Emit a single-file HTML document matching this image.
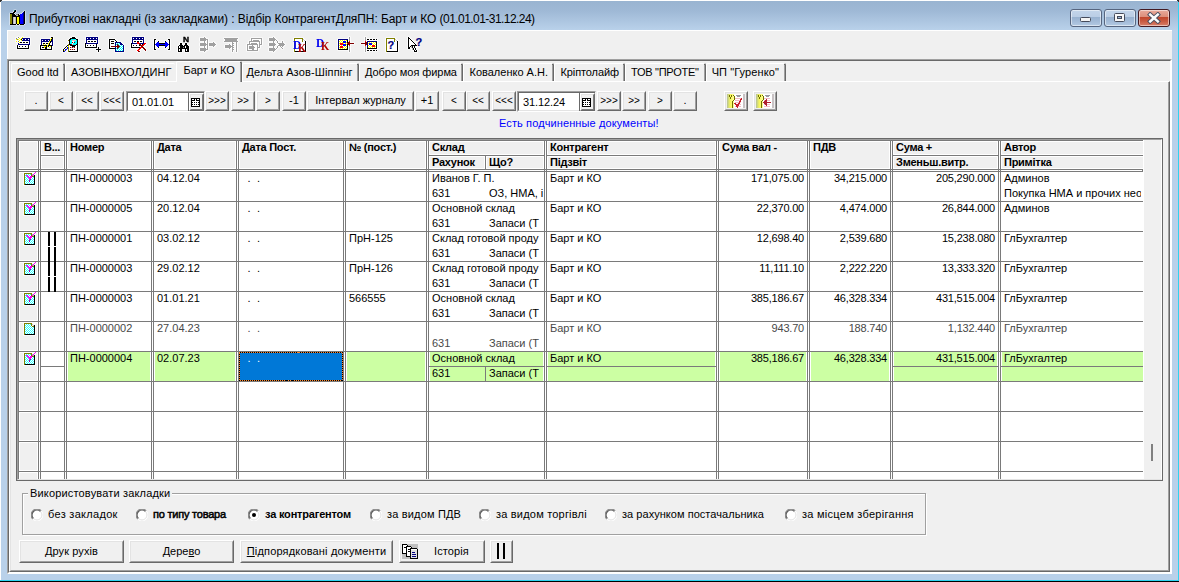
<!DOCTYPE html>
<html lang="uk"><head><meta charset="utf-8"><title>Прибуткові накладні</title>
<style>
html,body{margin:0;padding:0;}
body{width:1179px;height:582px;overflow:hidden;background:#fff;position:relative;
 font-family:"Liberation Sans",sans-serif;font-size:11px;color:#000;}
div,span{position:absolute;box-sizing:border-box;}
.t{white-space:nowrap;line-height:13px;height:13px;font-size:11px;}
.b{font-weight:bold;letter-spacing:-0.26px;}
.btn{background:#f0f0f0;border-style:solid;border-width:1px;border-color:#fff #696969 #696969 #fff;}
.btn>i{position:absolute;left:0;top:0;right:0;bottom:0;border-style:solid;border-width:1px;border-color:#e3e3e3 #a0a0a0 #a0a0a0 #e3e3e3;}
.btn>span{left:0;right:0;text-align:center;white-space:nowrap;line-height:13px;}
.hc{background:#f0f0f0;border:1px solid #7a7a7a;box-shadow:inset 0 0 0 1px #fff;}
.dc{background:#fff;border:1px solid #7a7a7a;}
.clip{overflow:hidden;}
.cb{border:1px solid #56657f;border-radius:3px;box-shadow:inset 0 0 0 1px rgba(255,255,255,.55);}
.ig{font-weight:bold;line-height:1;white-space:nowrap;}
</style></head>
<body>
<div style="left:1px;top:1px;width:1178px;height:580px;background:#b9d1ea;"></div>
<div style="left:1px;top:1px;width:1178px;height:29px;background:linear-gradient(#99b4d1,#9fb9d6 35%,#b9d1ea);"></div>
<div style="left:1178px;top:2px;width:1px;height:579px;background:#2fd3f0;"></div>
<div style="left:0px;top:580px;width:1179px;height:1px;background:#2fd3f0;"></div>
<div style="left:0px;top:581px;width:1179px;height:1px;background:#000;"></div>
<div style="left:0px;top:0px;width:2px;height:1px;background:#333;"></div>
<div style="left:0px;top:1px;width:1px;height:1px;background:#333;"></div>
<div style="left:1177px;top:0px;width:2px;height:1px;background:#333;"></div>
<div style="left:1178px;top:1px;width:1px;height:1px;background:#333;"></div>
<svg style="position:absolute;left:10px;top:9px;filter:drop-shadow(1px 0 0 rgba(255,255,255,.3)) drop-shadow(-1px 0 0 rgba(255,255,255,.3)) drop-shadow(0 1px 0 rgba(255,255,255,.3)) drop-shadow(0 -1px 0 rgba(255,255,255,.3));" width="16" height="16" viewBox="0 0 16 16" shape-rendering="crispEdges"><path fill="#008080" d="M4 1h1v1h-1z"/><path fill="#000000" d="M5 1h1v1h-1zM4 2h2v1h-2zM14 2h1v1h-1zM3 3h2v1h-2zM14 3h1v1h-1zM0 4h4v1h-4zM14 4h1v1h-1zM2 5h3v1h-3zM8 5h1v1h-1zM14 5h1v1h-1zM2 6h4v1h-4zM8 6h2v1h-2zM14 6h1v1h-1zM2 7h8v1h-8zM14 7h1v1h-1zM2 8h1v1h-1zM6 8h1v1h-1zM9 8h1v1h-1zM14 8h1v1h-1zM2 9h1v1h-1zM6 9h1v1h-1zM9 9h1v1h-1zM14 9h1v1h-1zM2 10h1v1h-1zM6 10h1v1h-1zM9 10h1v1h-1zM14 10h1v1h-1zM2 11h1v1h-1zM6 11h1v1h-1zM9 11h1v1h-1zM14 11h1v1h-1zM2 12h1v1h-1zM6 12h1v1h-1zM9 12h1v1h-1zM14 12h1v1h-1zM2 13h1v1h-1zM6 13h1v1h-1zM9 13h1v1h-1zM14 13h1v1h-1zM2 14h1v1h-1zM6 14h1v1h-1zM9 14h1v1h-1zM14 14h1v1h-1zM0 15h6v1h-6zM7 15h2v1h-2zM10 15h4v1h-4z"/><path fill="#000080" d="M13 3h1v1h-1zM13 4h1v1h-1zM13 5h1v1h-1zM13 6h1v1h-1zM13 7h1v1h-1zM13 8h1v1h-1zM13 9h1v1h-1zM13 10h1v1h-1zM13 11h1v1h-1zM13 12h1v1h-1zM13 13h1v1h-1zM13 14h1v1h-1z"/><path fill="#0000ff" d="M12 4h1v1h-1zM10 5h3v1h-3zM10 6h3v1h-3zM10 7h3v1h-3zM10 8h3v1h-3zM10 9h3v1h-3zM10 10h3v1h-3zM10 11h3v1h-3zM10 12h3v1h-3zM10 13h3v1h-3zM10 14h3v1h-3z"/><path fill="#808000" d="M0 5h2v1h-2zM0 6h2v1h-2zM0 7h2v1h-2zM0 8h2v1h-2zM0 9h2v1h-2zM0 10h2v1h-2zM0 11h2v1h-2zM0 12h2v1h-2zM0 13h2v1h-2zM0 14h2v1h-2z"/><path fill="#808080" d="M6 5h2v1h-2z"/><path fill="#c0c0c0" d="M6 6h2v1h-2zM3 8h1v1h-1zM5 8h1v1h-1zM3 9h1v1h-1zM5 9h1v1h-1zM3 10h1v1h-1zM5 10h1v1h-1zM3 11h1v1h-1zM5 11h1v1h-1zM3 12h1v1h-1zM5 12h1v1h-1zM3 13h1v1h-1zM5 13h1v1h-1zM3 14h1v1h-1zM5 14h1v1h-1z"/><path fill="#e0e0e0" d="M4 8h1v1h-1zM4 9h1v1h-1zM4 10h1v1h-1zM4 11h1v1h-1zM4 12h1v1h-1zM4 13h1v1h-1zM4 14h1v1h-1z"/><path fill="#ffff00" d="M7 8h2v1h-2zM7 9h2v1h-2zM7 10h2v1h-2zM7 11h2v1h-2zM7 12h2v1h-2zM7 13h2v1h-2zM7 14h2v1h-2z"/></svg>
<span class="t title" style="left:29px;top:12px;font-size:12px;line-height:15px;height:15px;letter-spacing:-0.07px;">Прибуткові накладні (із закладками) : Відбір КонтрагентДляПН: Барт и КО <span style="position:static;letter-spacing:-0.55px;">(01.01.01-31.12.24)</span></span>
<div style="left:1070px;top:9px;width:32px;height:18px;background:linear-gradient(#c3d5ea 0%,#bacde5 45%,#98b2d0 46%,#a3bbd8 70%,#b4cae3 100%);border:1px solid #56657f;border-radius:3px;box-shadow:inset 0 0 0 1px rgba(255,255,255,.5);"><svg style="position:absolute;left:9px;top:7px" width="11" height="5" viewBox="0 0 11 5"><rect x="0.5" y="0.5" width="10" height="4" rx="1" fill="#f4f4f4" stroke="#454a5a"/></svg></div>
<div style="left:1104px;top:9px;width:32px;height:18px;background:linear-gradient(#c3d5ea 0%,#bacde5 45%,#98b2d0 46%,#a3bbd8 70%,#b4cae3 100%);border:1px solid #56657f;border-radius:3px;box-shadow:inset 0 0 0 1px rgba(255,255,255,.5);"><svg style="position:absolute;left:9px;top:3px" width="11" height="9" viewBox="0 0 11 9"><rect x="0.5" y="0.5" width="10" height="8" rx="1" fill="#f8f8f8" stroke="#454a5a"/><rect x="3.5" y="3.5" width="4" height="2" fill="#9db7d6" stroke="#454a5a"/></svg></div>
<div style="left:1138px;top:9px;width:32px;height:18px;background:linear-gradient(#e9aa9b 0%,#dc8d79 45%,#c2472c 46%,#c85a41 70%,#d8806b 100%);border:1px solid #431a22;border-radius:3px;box-shadow:inset 0 0 0 1px rgba(255,255,255,.5);"><svg style="position:absolute;left:8px;top:2px" width="14" height="12" viewBox="0 0 14 12"><path d="M3.2 2.6L10.8 9.4M10.8 2.6L3.2 9.4" fill="none" stroke="#4a4f60" stroke-width="4.4" stroke-linecap="square"/><path d="M3.2 2.6L10.8 9.4M10.8 2.6L3.2 9.4" fill="none" stroke="#fbfbfb" stroke-width="2.5" stroke-linecap="square"/></svg></div>
<div style="left:7px;top:30px;width:1165px;height:544px;background:#f0f0f0;"></div>
<div style="left:7px;top:30px;width:1165px;height:1px;background:#fff;"></div>
<div style="left:7px;top:30px;width:1px;height:29px;background:#fff;"></div>
<svg style="position:absolute;left:15px;top:36px;filter:drop-shadow(1px 0 0 rgba(255,255,255,.6)) drop-shadow(-1px 0 0 rgba(255,255,255,.6)) drop-shadow(0 1px 0 rgba(255,255,255,.6)) drop-shadow(0 -1px 0 rgba(255,255,255,.6));" width="16" height="16" viewBox="0 0 16 16" shape-rendering="crispEdges"><path fill="#808080" d="M3 1h1v1h-1zM1 2h1v1h-1zM2 3h1v1h-1zM3 5h1v1h-1z"/><path fill="#ffff00" d="M7 1h1v1h-1zM4 2h1v1h-1zM6 2h1v1h-1zM1 3h1v1h-1zM3 3h1v1h-1zM5 3h1v1h-1zM4 4h1v1h-1zM6 4h1v1h-1zM1 5h1v1h-1zM4 6h1v1h-1z"/><path fill="#000080" d="M7 2h8v1h-8zM8 3h2v1h-2zM11 3h2v1h-2zM14 3h1v1h-1zM7 4h8v1h-8zM14 5h1v1h-1zM14 6h1v1h-1zM3 7h1v1h-1zM14 7h1v1h-1zM3 8h12v1h-12z"/><path fill="#ffffff" d="M4 3h1v1h-1zM7 3h1v1h-1zM10 3h1v1h-1zM13 3h1v1h-1zM4 5h10v1h-10zM7 6h1v1h-1zM10 6h1v1h-1zM13 6h1v1h-1zM4 7h10v1h-10zM3 9h10v1h-10zM3 10h1v1h-1zM5 10h2v1h-2zM8 10h2v1h-2zM11 10h2v1h-2zM3 11h10v1h-10z"/><path fill="#000000" d="M6 3h1v1h-1zM5 6h2v1h-2zM8 6h2v1h-2zM11 6h2v1h-2zM2 9h1v1h-1zM13 9h1v1h-1zM2 10h1v1h-1zM4 10h1v1h-1zM7 10h1v1h-1zM10 10h1v1h-1zM13 10h1v1h-1zM2 11h1v1h-1zM13 11h1v1h-1zM2 12h12v1h-12z"/></svg>
<svg style="position:absolute;left:39px;top:36px;filter:drop-shadow(1px 0 0 rgba(255,255,255,.6)) drop-shadow(-1px 0 0 rgba(255,255,255,.6)) drop-shadow(0 1px 0 rgba(255,255,255,.6)) drop-shadow(0 -1px 0 rgba(255,255,255,.6));" width="16" height="16" viewBox="0 0 16 16" shape-rendering="crispEdges"><path fill="#000000" d="M12 1h2v1h-2zM13 2h1v1h-1zM12 3h1v1h-1zM12 4h1v1h-1zM11 5h1v1h-1zM11 6h1v1h-1zM4 7h2v1h-2zM7 7h2v1h-2zM10 7h1v1h-1zM10 8h1v1h-1zM1 9h7v1h-7zM9 9h4v1h-4zM1 10h1v1h-1zM7 10h1v1h-1zM9 10h1v1h-1zM12 10h1v1h-1zM1 11h1v1h-1zM3 11h2v1h-2zM6 11h2v1h-2zM12 11h1v1h-1zM1 12h1v1h-1zM6 12h2v1h-2zM12 12h1v1h-1zM1 13h12v1h-12z"/><path fill="#ffff00" d="M12 2h1v1h-1zM11 3h1v1h-1zM11 4h1v1h-1zM10 5h1v1h-1zM10 6h1v1h-1zM9 7h1v1h-1zM4 8h1v1h-1zM6 8h1v1h-1zM9 8h1v1h-1zM8 9h1v1h-1zM5 10h2v1h-2zM8 10h1v1h-1zM11 10h1v1h-1zM5 11h1v1h-1zM10 11h1v1h-1z"/><path fill="#000080" d="M2 3h9v1h-9zM13 3h1v1h-1zM2 4h1v1h-1zM4 4h2v1h-2zM7 4h2v1h-2zM10 4h1v1h-1zM13 4h1v1h-1zM2 5h8v1h-8zM12 5h2v1h-2zM2 6h1v1h-1zM13 6h1v1h-1zM2 7h1v1h-1zM13 7h1v1h-1zM2 8h1v1h-1zM13 8h1v1h-1zM13 9h1v1h-1z"/><path fill="#ffffff" d="M3 4h1v1h-1zM6 4h1v1h-1zM9 4h1v1h-1zM3 6h7v1h-7zM12 6h1v1h-1zM3 7h1v1h-1zM6 7h1v1h-1zM11 7h2v1h-2zM3 8h1v1h-1zM5 8h1v1h-1zM7 8h2v1h-2zM11 8h2v1h-2zM2 10h3v1h-3zM10 10h1v1h-1zM2 11h1v1h-1zM8 11h2v1h-2zM11 11h1v1h-1zM2 12h4v1h-4zM8 12h4v1h-4z"/></svg>
<svg style="position:absolute;left:62px;top:36px;filter:drop-shadow(1px 0 0 rgba(255,255,255,.6)) drop-shadow(-1px 0 0 rgba(255,255,255,.6)) drop-shadow(0 1px 0 rgba(255,255,255,.6)) drop-shadow(0 -1px 0 rgba(255,255,255,.6));" width="16" height="16" viewBox="0 0 16 16" shape-rendering="crispEdges"><path fill="#000000" d="M10 1h3v1h-3zM8 2h6v1h-6zM7 3h2v1h-2zM14 3h2v1h-2zM7 4h1v1h-1zM15 4h1v1h-1zM7 5h1v1h-1zM15 5h1v1h-1zM7 6h1v1h-1zM15 6h1v1h-1zM7 7h1v1h-1zM15 7h1v1h-1zM7 8h2v1h-2zM14 8h2v1h-2zM5 9h1v1h-1zM8 9h6v1h-6zM15 9h1v1h-1zM4 10h1v1h-1zM10 10h3v1h-3zM15 10h1v1h-1zM3 11h1v1h-1zM15 11h1v1h-1zM2 12h1v1h-1zM15 12h1v1h-1zM1 13h1v1h-1zM15 13h1v1h-1zM1 14h1v1h-1zM15 14h1v1h-1zM1 15h1v1h-1zM7 15h9v1h-9z"/><path fill="#00ffff" d="M9 3h5v1h-5zM8 4h2v1h-2zM14 4h1v1h-1zM8 5h2v1h-2zM12 5h3v1h-3zM8 6h2v1h-2zM13 6h2v1h-2zM8 7h2v1h-2zM11 7h4v1h-4zM11 8h3v1h-3z"/><path fill="#808000" d="M6 4h1v1h-1zM6 8h1v1h-1zM6 9h1v1h-1zM6 11h1v1h-1zM6 12h1v1h-1zM6 13h1v1h-1zM6 14h1v1h-1zM6 15h1v1h-1z"/><path fill="#f0b0b8" d="M10 4h4v1h-4zM10 8h1v1h-1zM9 11h1v1h-1zM11 11h1v1h-1zM9 13h1v1h-1zM11 13h1v1h-1z"/><path fill="#ffffff" d="M10 5h2v1h-2zM11 6h1v1h-1zM10 7h1v1h-1zM7 9h1v1h-1zM14 9h1v1h-1zM7 10h3v1h-3zM13 10h2v1h-2zM7 11h1v1h-1zM13 11h2v1h-2zM7 12h8v1h-8zM7 13h1v1h-1zM13 13h2v1h-2zM7 14h8v1h-8z"/><path fill="#800000" d="M10 6h1v1h-1zM12 6h1v1h-1zM9 8h1v1h-1zM8 11h1v1h-1zM10 11h1v1h-1zM12 11h1v1h-1zM8 13h1v1h-1zM10 13h1v1h-1zM12 13h1v1h-1z"/><path fill="#ffff00" d="M6 10h1v1h-1zM4 12h1v1h-1zM2 14h1v1h-1z"/><path fill="#0000ff" d="M5 11h1v1h-1zM5 12h1v1h-1zM3 13h2v1h-2zM3 14h1v1h-1zM2 15h1v1h-1z"/></svg>
<svg style="position:absolute;left:85px;top:36px;filter:drop-shadow(1px 0 0 rgba(255,255,255,.6)) drop-shadow(-1px 0 0 rgba(255,255,255,.6)) drop-shadow(0 1px 0 rgba(255,255,255,.6)) drop-shadow(0 -1px 0 rgba(255,255,255,.6));" width="16" height="16" viewBox="0 0 16 16" shape-rendering="crispEdges"><path fill="#000080" d="M1 1h12v1h-12zM1 2h1v1h-1zM3 2h2v1h-2zM6 2h2v1h-2zM9 2h2v1h-2zM12 2h1v1h-1zM1 3h12v1h-12zM1 4h1v1h-1zM12 4h1v1h-1zM1 5h1v1h-1zM12 5h1v1h-1zM1 6h1v1h-1zM12 6h1v1h-1zM1 7h12v1h-12z"/><path fill="#ffffff" d="M2 2h1v1h-1zM5 2h1v1h-1zM8 2h1v1h-1zM11 2h1v1h-1zM2 4h10v1h-10zM2 5h1v1h-1zM5 5h1v1h-1zM8 5h1v1h-1zM11 5h1v1h-1zM2 6h10v1h-10zM1 8h10v1h-10zM1 9h1v1h-1zM3 9h2v1h-2zM6 9h2v1h-2zM9 9h2v1h-2zM1 10h10v1h-10z"/><path fill="#000000" d="M3 5h2v1h-2zM6 5h2v1h-2zM9 5h2v1h-2zM0 7h1v1h-1zM0 8h1v1h-1zM11 8h1v1h-1zM0 9h1v1h-1zM2 9h1v1h-1zM5 9h1v1h-1zM8 9h1v1h-1zM11 9h1v1h-1zM0 10h1v1h-1zM11 10h1v1h-1zM0 11h12v1h-12zM13 11h1v1h-1zM13 12h1v1h-1zM11 13h5v1h-5zM13 14h1v1h-1zM13 15h1v1h-1z"/></svg>
<svg style="position:absolute;left:108px;top:36px;filter:drop-shadow(1px 0 0 rgba(255,255,255,.6)) drop-shadow(-1px 0 0 rgba(255,255,255,.6)) drop-shadow(0 1px 0 rgba(255,255,255,.6)) drop-shadow(0 -1px 0 rgba(255,255,255,.6));" width="16" height="16" viewBox="0 0 16 16" shape-rendering="crispEdges"><path fill="#000000" d="M1 3h6v1h-6zM1 4h1v1h-1zM7 4h1v1h-1zM1 5h1v1h-1zM3 5h3v1h-3zM8 5h1v1h-1zM1 6h1v1h-1zM1 7h1v1h-1zM3 7h3v1h-3zM1 8h1v1h-1zM1 9h1v1h-1zM1 10h1v1h-1zM1 11h1v1h-1zM1 12h6v1h-6z"/><path fill="#ffffff" d="M2 4h5v1h-5zM2 5h1v1h-1zM6 5h2v1h-2zM2 6h5v1h-5zM2 7h1v1h-1zM6 7h1v1h-1zM8 7h1v1h-1zM10 7h1v1h-1zM2 8h5v1h-5zM11 8h1v1h-1zM2 9h5v1h-5zM8 9h1v1h-1zM12 9h1v1h-1zM14 9h1v1h-1zM2 10h1v1h-1zM13 10h1v1h-1zM2 11h5v1h-5zM8 11h1v1h-1zM12 11h1v1h-1zM14 11h1v1h-1zM11 12h1v1h-1zM13 12h1v1h-1zM8 13h1v1h-1zM10 13h1v1h-1zM12 13h1v1h-1zM14 13h1v1h-1zM9 14h1v1h-1zM11 14h1v1h-1zM13 14h1v1h-1z"/><path fill="#000080" d="M7 6h6v1h-6zM7 7h1v1h-1zM12 7h2v1h-2zM7 8h1v1h-1zM12 8h3v1h-3zM7 9h1v1h-1zM15 9h1v1h-1zM15 10h1v1h-1zM7 11h1v1h-1zM15 11h1v1h-1zM7 12h1v1h-1zM15 12h1v1h-1zM7 13h1v1h-1zM15 13h1v1h-1zM7 14h1v1h-1zM15 14h1v1h-1zM7 15h9v1h-9z"/><path fill="#00ffff" d="M9 7h1v1h-1zM11 7h1v1h-1zM8 8h1v1h-1zM10 8h1v1h-1zM11 9h1v1h-1zM13 9h1v1h-1zM12 10h1v1h-1zM14 10h1v1h-1zM11 11h1v1h-1zM13 11h1v1h-1zM8 12h1v1h-1zM10 12h1v1h-1zM12 12h1v1h-1zM14 12h1v1h-1zM9 13h1v1h-1zM11 13h1v1h-1zM13 13h1v1h-1zM8 14h1v1h-1zM10 14h1v1h-1zM12 14h1v1h-1zM14 14h1v1h-1z"/><path fill="#800000" d="M9 8h1v1h-1zM9 9h2v1h-2zM3 10h9v1h-9zM9 11h2v1h-2zM9 12h1v1h-1z"/></svg>
<svg style="position:absolute;left:131px;top:36px;filter:drop-shadow(1px 0 0 rgba(255,255,255,.6)) drop-shadow(-1px 0 0 rgba(255,255,255,.6)) drop-shadow(0 1px 0 rgba(255,255,255,.6)) drop-shadow(0 -1px 0 rgba(255,255,255,.6));" width="16" height="16" viewBox="0 0 16 16" shape-rendering="crispEdges"><path fill="#000080" d="M1 1h12v1h-12zM1 2h1v1h-1zM3 2h2v1h-2zM6 2h2v1h-2zM9 2h2v1h-2zM12 2h1v1h-1zM1 3h12v1h-12zM1 4h1v1h-1zM12 4h1v1h-1zM1 5h1v1h-1zM12 5h1v1h-1zM1 6h1v1h-1zM12 6h1v1h-1zM1 7h5v1h-5zM9 7h4v1h-4z"/><path fill="#ffffff" d="M2 2h1v1h-1zM5 2h1v1h-1zM8 2h1v1h-1zM11 2h1v1h-1zM2 4h10v1h-10zM2 5h1v1h-1zM5 5h1v1h-1zM8 5h1v1h-1zM11 5h1v1h-1zM2 6h4v1h-4zM8 6h4v1h-4zM1 8h7v1h-7zM10 8h1v1h-1zM1 9h1v1h-1zM3 9h2v1h-2zM6 9h2v1h-2zM1 10h9v1h-9z"/><path fill="#000000" d="M3 5h2v1h-2zM6 5h2v1h-2zM9 5h2v1h-2zM0 7h1v1h-1zM0 8h1v1h-1zM11 8h1v1h-1zM0 9h1v1h-1zM2 9h1v1h-1zM5 9h1v1h-1zM8 9h1v1h-1zM0 10h1v1h-1zM0 11h9v1h-9z"/><path fill="#ff0000" d="M6 6h2v1h-2zM6 7h2v1h-2zM13 7h2v1h-2zM12 8h2v1h-2zM11 9h2v1h-2zM9 11h2v1h-2zM8 12h2v1h-2zM7 13h2v1h-2zM6 14h2v1h-2z"/><path fill="#800000" d="M8 7h1v1h-1zM8 8h2v1h-2zM9 9h2v1h-2zM10 10h2v1h-2zM11 11h2v1h-2zM12 12h2v1h-2zM13 13h2v1h-2zM14 14h1v1h-1zM7 15h2v1h-2z"/></svg>
<svg style="position:absolute;left:154px;top:36px;filter:drop-shadow(1px 0 0 rgba(255,255,255,.6)) drop-shadow(-1px 0 0 rgba(255,255,255,.6)) drop-shadow(0 1px 0 rgba(255,255,255,.6)) drop-shadow(0 -1px 0 rgba(255,255,255,.6));" width="16" height="16" viewBox="0 0 16 16" shape-rendering="crispEdges"><path fill="#000000" d="M0 3h2v1h-2zM14 3h2v1h-2zM0 4h1v1h-1zM15 4h1v1h-1zM0 5h1v1h-1zM4 5h1v1h-1zM11 5h1v1h-1zM15 5h1v1h-1zM0 6h1v1h-1zM15 6h1v1h-1zM0 7h1v1h-1zM5 7h6v1h-6zM15 7h1v1h-1zM0 8h1v1h-1zM15 8h1v1h-1zM0 9h1v1h-1zM5 9h6v1h-6zM15 9h1v1h-1zM0 10h1v1h-1zM15 10h1v1h-1zM0 11h1v1h-1zM4 11h1v1h-1zM11 11h1v1h-1zM15 11h1v1h-1zM0 12h1v1h-1zM15 12h1v1h-1zM0 13h2v1h-2zM14 13h2v1h-2z"/><path fill="#0000ff" d="M3 6h2v1h-2zM11 6h2v1h-2zM2 7h3v1h-3zM11 7h3v1h-3zM1 8h14v1h-14zM2 9h3v1h-3zM11 9h3v1h-3zM3 10h2v1h-2zM11 10h2v1h-2z"/></svg>
<svg style="position:absolute;left:177px;top:36px;filter:drop-shadow(1px 0 0 rgba(255,255,255,.6)) drop-shadow(-1px 0 0 rgba(255,255,255,.6)) drop-shadow(0 1px 0 rgba(255,255,255,.6)) drop-shadow(0 -1px 0 rgba(255,255,255,.6));" width="16" height="16" viewBox="0 0 16 16" shape-rendering="crispEdges"><path fill="#000000" d="M3 7h2v1h-2zM8 7h2v1h-2zM3 8h2v1h-2zM8 8h2v1h-2zM2 9h4v1h-4zM7 9h4v1h-4zM1 10h1v1h-1zM3 10h5v1h-5zM9 10h3v1h-3zM1 11h1v1h-1zM3 11h3v1h-3zM7 11h1v1h-1zM9 11h3v1h-3zM1 12h11v1h-11zM1 13h1v1h-1zM3 13h2v1h-2zM8 13h1v1h-1zM10 13h2v1h-2zM1 14h1v1h-1zM3 14h2v1h-2zM8 14h1v1h-1zM10 14h2v1h-2zM1 15h4v1h-4zM8 15h4v1h-4z"/><path fill="#ffffff" d="M2 10h1v1h-1zM8 10h1v1h-1zM2 11h1v1h-1zM8 11h1v1h-1zM2 13h1v1h-1zM9 13h1v1h-1zM2 14h1v1h-1zM9 14h1v1h-1z"/><path fill="#808080" d="M6 11h1v1h-1z"/></svg>
<svg style="position:absolute;left:200px;top:36px;filter:drop-shadow(1px 0 0 rgba(255,255,255,.6)) drop-shadow(-1px 0 0 rgba(255,255,255,.6)) drop-shadow(0 1px 0 rgba(255,255,255,.6)) drop-shadow(0 -1px 0 rgba(255,255,255,.6));" width="16" height="16" viewBox="0 0 16 16" shape-rendering="crispEdges"><path fill="#a0a0a0" d="M4 1h1v1h-1zM0 2h6v1h-6zM0 3h8v1h-8zM0 4h6v1h-6zM7 4h1v1h-1zM4 5h1v1h-1zM7 5h1v1h-1zM4 6h1v1h-1zM7 6h1v1h-1zM13 6h1v1h-1zM0 7h6v1h-6zM7 7h1v1h-1zM9 7h6v1h-6zM0 8h8v1h-8zM9 8h7v1h-7zM0 9h6v1h-6zM7 9h1v1h-1zM9 9h6v1h-6zM4 10h1v1h-1zM7 10h1v1h-1zM13 10h1v1h-1zM4 11h1v1h-1zM7 11h1v1h-1zM0 12h6v1h-6zM7 12h1v1h-1zM0 13h8v1h-8zM0 14h6v1h-6zM4 15h1v1h-1z"/></svg>
<svg style="position:absolute;left:223px;top:36px;filter:drop-shadow(1px 0 0 rgba(255,255,255,.6)) drop-shadow(-1px 0 0 rgba(255,255,255,.6)) drop-shadow(0 1px 0 rgba(255,255,255,.6)) drop-shadow(0 -1px 0 rgba(255,255,255,.6));" width="16" height="16" viewBox="0 0 16 16" shape-rendering="crispEdges"><path fill="#a0a0a0" d="M1 2h14v1h-14zM2 3h12v1h-12zM2 4h12v1h-12zM1 5h14v1h-14zM9 6h1v1h-1zM13 6h1v1h-1zM9 7h2v1h-2zM13 7h1v1h-1zM6 8h1v1h-1zM9 8h1v1h-1zM13 8h1v1h-1zM2 9h6v1h-6zM9 9h2v1h-2zM13 9h1v1h-1zM2 10h8v1h-8zM13 10h1v1h-1zM2 11h6v1h-6zM9 11h2v1h-2zM13 11h1v1h-1zM6 12h1v1h-1zM9 12h1v1h-1zM13 12h1v1h-1zM9 13h2v1h-2zM13 13h1v1h-1zM9 14h1v1h-1zM13 14h1v1h-1zM9 15h1v1h-1zM13 15h1v1h-1z"/></svg>
<svg style="position:absolute;left:246px;top:36px;filter:drop-shadow(1px 0 0 rgba(255,255,255,.6)) drop-shadow(-1px 0 0 rgba(255,255,255,.6)) drop-shadow(0 1px 0 rgba(255,255,255,.6)) drop-shadow(0 -1px 0 rgba(255,255,255,.6));" width="16" height="16" viewBox="0 0 16 16" shape-rendering="crispEdges"><path fill="#a0a0a0" d="M5 2h11v1h-11zM5 3h1v1h-1zM15 3h1v1h-1zM5 4h1v1h-1zM7 4h6v1h-6zM15 4h1v1h-1zM3 5h11v1h-11zM15 5h1v1h-1zM3 6h1v1h-1zM13 6h1v1h-1zM15 6h1v1h-1zM3 7h1v1h-1zM5 7h6v1h-6zM13 7h1v1h-1zM15 7h1v1h-1zM1 8h11v1h-11zM13 8h3v1h-3zM1 9h1v1h-1zM6 9h1v1h-1zM11 9h1v1h-1zM13 9h1v1h-1zM1 10h1v1h-1zM3 10h5v1h-5zM11 10h1v1h-1zM13 10h1v1h-1zM1 11h1v1h-1zM3 11h6v1h-6zM11 11h3v1h-3zM1 12h1v1h-1zM3 12h5v1h-5zM11 12h1v1h-1zM1 13h1v1h-1zM6 13h2v1h-2zM11 13h1v1h-1zM1 14h11v1h-11z"/><path fill="#ffffff" d="M6 3h9v1h-9zM6 4h1v1h-1zM13 4h2v1h-2zM14 5h1v1h-1zM4 6h9v1h-9zM14 6h1v1h-1zM4 7h1v1h-1zM11 7h2v1h-2zM14 7h1v1h-1zM12 8h1v1h-1zM2 9h4v1h-4zM7 9h4v1h-4zM12 9h1v1h-1zM2 10h1v1h-1zM8 10h3v1h-3zM12 10h1v1h-1zM2 11h1v1h-1zM9 11h2v1h-2zM2 12h1v1h-1zM8 12h3v1h-3zM2 13h4v1h-4zM8 13h3v1h-3z"/></svg>
<svg style="position:absolute;left:269px;top:36px;filter:drop-shadow(1px 0 0 rgba(255,255,255,.6)) drop-shadow(-1px 0 0 rgba(255,255,255,.6)) drop-shadow(0 1px 0 rgba(255,255,255,.6)) drop-shadow(0 -1px 0 rgba(255,255,255,.6));" width="16" height="16" viewBox="0 0 16 16" shape-rendering="crispEdges"><path fill="#a0a0a0" d="M4 1h1v1h-1zM0 2h6v1h-6zM0 3h7v1h-7zM0 4h6v1h-6zM7 4h1v1h-1zM4 5h1v1h-1zM8 5h1v1h-1zM13 5h1v1h-1zM4 6h1v1h-1zM8 6h1v1h-1zM13 6h1v1h-1zM0 7h6v1h-6zM9 7h6v1h-6zM0 8h7v1h-7zM10 8h6v1h-6zM0 9h6v1h-6zM9 9h6v1h-6zM4 10h1v1h-1zM8 10h1v1h-1zM11 10h1v1h-1zM13 10h1v1h-1zM4 11h1v1h-1zM8 11h1v1h-1zM12 11h1v1h-1zM0 12h6v1h-6zM7 12h1v1h-1zM13 12h1v1h-1zM0 13h7v1h-7zM0 14h6v1h-6zM4 15h1v1h-1z"/><path fill="#ffffff" d="M8 8h2v1h-2z"/></svg>
<svg style="position:absolute;left:292px;top:36px;filter:drop-shadow(1px 0 0 rgba(255,255,255,.6)) drop-shadow(-1px 0 0 rgba(255,255,255,.6)) drop-shadow(0 1px 0 rgba(255,255,255,.6)) drop-shadow(0 -1px 0 rgba(255,255,255,.6));" width="16" height="16" viewBox="0 0 16 16" shape-rendering="crispEdges"><path fill="#808000" d="M2 2h9v1h-9zM2 3h1v1h-1zM10 3h1v1h-1zM2 4h1v1h-1zM10 4h1v1h-1zM2 5h1v1h-1zM10 5h1v1h-1zM2 6h1v1h-1zM2 7h1v1h-1zM2 8h1v1h-1zM2 9h1v1h-1zM2 10h1v1h-1zM2 11h1v1h-1zM2 12h1v1h-1zM2 13h1v1h-1zM2 14h1v1h-1zM2 15h1v1h-1z"/><path fill="#ffffff" d="M3 3h7v1h-7zM3 4h7v1h-7zM11 4h1v1h-1zM3 5h7v1h-7zM11 5h2v1h-2zM3 6h10v1h-10zM3 7h10v1h-10zM3 8h10v1h-10zM3 9h10v1h-10zM3 10h10v1h-10zM3 11h10v1h-10zM3 12h10v1h-10zM3 13h10v1h-10zM3 14h10v1h-10z"/><path fill="#c0c0c0" d="M11 3h1v1h-1zM12 4h1v1h-1z"/><path fill="#000000" d="M13 5h1v1h-1zM13 6h1v1h-1zM13 7h1v1h-1zM13 8h1v1h-1zM13 9h1v1h-1zM13 10h1v1h-1zM13 11h1v1h-1zM13 12h1v1h-1zM13 13h1v1h-1zM13 14h1v1h-1zM3 15h11v1h-11z"/></svg>
<svg style="position:absolute;left:338px;top:36px;filter:drop-shadow(1px 0 0 rgba(255,255,255,.6)) drop-shadow(-1px 0 0 rgba(255,255,255,.6)) drop-shadow(0 1px 0 rgba(255,255,255,.6)) drop-shadow(0 -1px 0 rgba(255,255,255,.6));" width="16" height="16" viewBox="0 0 16 16" shape-rendering="crispEdges"><path fill="#a0a0a0" d="M11 1h1v1h-1zM11 2h1v1h-1zM11 3h1v1h-1zM11 4h1v1h-1zM11 10h1v1h-1zM11 11h1v1h-1zM11 12h1v1h-1zM11 13h1v1h-1zM11 14h1v1h-1zM11 15h1v1h-1z"/><path fill="#000080" d="M0 3h10v1h-10zM0 4h1v1h-1zM0 5h1v1h-1zM0 6h1v1h-1zM0 7h1v1h-1zM0 8h1v1h-1zM0 9h1v1h-1zM0 10h1v1h-1zM0 11h1v1h-1zM0 12h1v1h-1z"/><path fill="#ffffff" d="M1 4h1v1h-1zM3 4h1v1h-1zM5 4h1v1h-1zM7 4h1v1h-1zM2 5h1v1h-1zM4 5h1v1h-1zM8 5h1v1h-1zM1 6h1v1h-1zM3 6h1v1h-1zM6 7h1v1h-1zM8 7h1v1h-1zM1 8h1v1h-1zM2 9h1v1h-1zM4 9h1v1h-1zM8 9h1v1h-1zM1 10h1v1h-1zM5 10h1v1h-1zM7 10h1v1h-1zM6 11h1v1h-1zM8 11h1v1h-1zM1 12h1v1h-1zM3 12h1v1h-1zM5 12h1v1h-1zM7 12h1v1h-1z"/><path fill="#ffff00" d="M2 4h1v1h-1zM4 4h1v1h-1zM6 4h1v1h-1zM8 4h1v1h-1zM1 5h1v1h-1zM3 5h1v1h-1zM2 6h1v1h-1zM4 6h1v1h-1zM8 6h1v1h-1zM1 7h1v1h-1zM5 7h1v1h-1zM7 7h1v1h-1zM8 8h1v1h-1zM1 9h1v1h-1zM3 9h1v1h-1zM6 10h1v1h-1zM8 10h1v1h-1zM1 11h1v1h-1zM5 11h1v1h-1zM7 11h1v1h-1zM2 12h1v1h-1zM4 12h1v1h-1zM6 12h1v1h-1zM8 12h1v1h-1z"/><path fill="#000000" d="M9 4h1v1h-1zM9 5h1v1h-1zM9 6h1v1h-1zM9 8h1v1h-1zM9 9h1v1h-1zM9 10h1v1h-1zM9 11h1v1h-1zM9 12h1v1h-1zM0 13h10v1h-10z"/><path fill="#0000ff" d="M5 5h3v1h-3zM5 6h3v1h-3zM5 8h3v1h-3zM5 9h3v1h-3z"/><path fill="#ff0000" d="M11 5h1v1h-1zM2 7h3v1h-3zM9 7h1v1h-1zM2 8h3v1h-3zM11 9h1v1h-1zM2 10h3v1h-3zM2 11h3v1h-3z"/><path fill="#800000" d="M10 6h2v1h-2zM10 7h6v1h-6zM10 8h2v1h-2z"/></svg>
<svg style="position:absolute;left:361px;top:36px;filter:drop-shadow(1px 0 0 rgba(255,255,255,.6)) drop-shadow(-1px 0 0 rgba(255,255,255,.6)) drop-shadow(0 1px 0 rgba(255,255,255,.6)) drop-shadow(0 -1px 0 rgba(255,255,255,.6));" width="16" height="16" viewBox="0 0 16 16" shape-rendering="crispEdges"><path fill="#a0a0a0" d="M4 1h1v1h-1zM4 2h1v1h-1zM4 3h1v1h-1zM4 4h1v1h-1zM4 10h1v1h-1zM4 11h1v1h-1zM4 12h1v1h-1zM4 13h1v1h-1zM4 14h1v1h-1zM4 15h1v1h-1z"/><path fill="#000000" d="M6 3h2v1h-2zM9 3h2v1h-2zM12 3h2v1h-2zM15 3h1v1h-1zM15 6h1v1h-1zM15 7h1v1h-1zM15 8h1v1h-1zM15 9h1v1h-1zM15 10h1v1h-1zM15 11h1v1h-1zM6 12h10v1h-10zM6 14h2v1h-2zM9 14h2v1h-2zM12 14h2v1h-2zM15 14h1v1h-1z"/><path fill="#ff0000" d="M4 5h1v1h-1zM4 9h1v1h-1zM11 9h3v1h-3zM11 10h3v1h-3z"/><path fill="#000080" d="M6 5h10v1h-10zM6 6h1v1h-1zM6 7h1v1h-1zM6 8h1v1h-1zM6 9h1v1h-1zM6 10h1v1h-1zM6 11h1v1h-1z"/><path fill="#800000" d="M4 6h2v1h-2zM0 7h6v1h-6zM4 8h2v1h-2z"/><path fill="#ffffff" d="M7 6h1v1h-1zM9 6h1v1h-1zM11 6h1v1h-1zM13 6h1v1h-1zM12 7h1v1h-1zM14 7h1v1h-1zM7 8h1v1h-1zM11 8h1v1h-1zM13 8h1v1h-1zM8 9h1v1h-1zM10 9h1v1h-1zM14 9h1v1h-1zM7 10h1v1h-1zM9 10h1v1h-1zM8 11h1v1h-1zM10 11h1v1h-1zM12 11h1v1h-1zM14 11h1v1h-1z"/><path fill="#ffff00" d="M8 6h1v1h-1zM10 6h1v1h-1zM12 6h1v1h-1zM14 6h1v1h-1zM7 7h1v1h-1zM11 7h1v1h-1zM13 7h1v1h-1zM12 8h1v1h-1zM14 8h1v1h-1zM7 9h1v1h-1zM9 9h1v1h-1zM8 10h1v1h-1zM10 10h1v1h-1zM14 10h1v1h-1zM7 11h1v1h-1zM9 11h1v1h-1zM11 11h1v1h-1zM13 11h1v1h-1z"/><path fill="#0000ff" d="M8 7h3v1h-3zM8 8h3v1h-3z"/></svg>
<svg style="position:absolute;left:384px;top:36px;filter:drop-shadow(1px 0 0 rgba(255,255,255,.6)) drop-shadow(-1px 0 0 rgba(255,255,255,.6)) drop-shadow(0 1px 0 rgba(255,255,255,.6)) drop-shadow(0 -1px 0 rgba(255,255,255,.6));" width="16" height="16" viewBox="0 0 16 16" shape-rendering="crispEdges"><path fill="#808000" d="M2 2h9v1h-9zM2 3h1v1h-1zM10 3h1v1h-1zM2 4h1v1h-1zM10 4h1v1h-1zM2 5h1v1h-1zM10 5h1v1h-1zM2 6h1v1h-1zM2 7h1v1h-1zM2 8h1v1h-1zM2 9h1v1h-1zM2 10h1v1h-1zM2 11h1v1h-1zM2 12h1v1h-1zM2 13h1v1h-1zM2 14h1v1h-1zM2 15h1v1h-1z"/><path fill="#ffffff" d="M3 3h7v1h-7zM3 4h7v1h-7zM11 4h1v1h-1zM3 5h7v1h-7zM11 5h2v1h-2zM3 6h10v1h-10zM3 7h10v1h-10zM3 8h10v1h-10zM3 9h10v1h-10zM3 10h10v1h-10zM3 11h10v1h-10zM3 12h10v1h-10zM3 13h10v1h-10zM3 14h10v1h-10z"/><path fill="#c0c0c0" d="M11 3h1v1h-1zM12 4h1v1h-1z"/><path fill="#000000" d="M13 5h1v1h-1zM13 6h1v1h-1zM13 7h1v1h-1zM13 8h1v1h-1zM13 9h1v1h-1zM13 10h1v1h-1zM13 11h1v1h-1zM13 12h1v1h-1zM13 13h1v1h-1zM13 14h1v1h-1zM3 15h11v1h-11z"/></svg>
<svg style="position:absolute;left:407px;top:36px;filter:drop-shadow(1px 0 0 rgba(255,255,255,.6)) drop-shadow(-1px 0 0 rgba(255,255,255,.6)) drop-shadow(0 1px 0 rgba(255,255,255,.6)) drop-shadow(0 -1px 0 rgba(255,255,255,.6));" width="16" height="16" viewBox="0 0 16 16" shape-rendering="crispEdges"><path fill="#000000" d="M1 1h1v1h-1zM1 2h2v1h-2zM1 3h1v1h-1zM3 3h1v1h-1zM1 4h1v1h-1zM4 4h1v1h-1zM1 5h1v1h-1zM5 5h1v1h-1zM1 6h1v1h-1zM6 6h1v1h-1zM1 7h1v1h-1zM7 7h1v1h-1zM1 8h1v1h-1zM8 8h1v1h-1zM1 9h1v1h-1zM4 9h6v1h-6zM1 10h1v1h-1zM3 10h1v1h-1zM5 10h1v1h-1zM7 10h1v1h-1zM1 11h2v1h-2zM5 11h1v1h-1zM7 11h1v1h-1zM1 12h2v1h-2zM6 12h1v1h-1zM8 12h1v1h-1zM6 13h1v1h-1zM8 13h1v1h-1zM7 14h1v1h-1zM9 14h1v1h-1zM7 15h3v1h-3z"/><path fill="#ffffff" d="M2 3h1v1h-1zM2 4h2v1h-2zM2 5h3v1h-3zM2 6h4v1h-4zM2 7h5v1h-5zM2 8h6v1h-6zM2 9h2v1h-2zM2 10h1v1h-1zM6 10h1v1h-1zM8 10h2v1h-2zM3 11h1v1h-1zM6 11h1v1h-1zM8 11h2v1h-2zM7 12h1v1h-1zM7 13h1v1h-1zM8 14h1v1h-1z"/><path fill="#c0c0c0" d="M4 10h1v1h-1zM4 11h1v1h-1zM5 12h1v1h-1zM5 13h1v1h-1z"/></svg>
<span class="ig" style="left:183px;top:36px;font-size:7px;color:#000;font-family:'Liberation Sans',sans-serif;transform:scaleX(1.2);transform-origin:0 0;-webkit-text-stroke:0.35px #000;">N</span>
<span class="ig" style="left:293px;top:39px;font-size:12px;color:#0000f0;font-family:'Liberation Serif',serif;transform:scaleX(0.95);transform-origin:0 0;">D</span>
<span class="ig" style="left:298px;top:42px;font-size:12px;color:#b00000;font-family:'Liberation Serif',serif;transform:scaleX(0.88);transform-origin:0 0;">K</span>
<span class="ig" style="left:316px;top:37px;font-size:12px;color:#0000f0;font-family:'Liberation Serif',serif;transform:scaleX(0.95);transform-origin:0 0;">D</span>
<span class="ig" style="left:321px;top:40px;font-size:12px;color:#b00000;font-family:'Liberation Serif',serif;transform:scaleX(0.88);transform-origin:0 0;">K</span>
<span class="ig" style="left:387.5px;top:40px;font-size:11px;color:#000080;font-family:'Liberation Sans',sans-serif;-webkit-text-stroke:0.2px #000080;">?</span>
<span class="ig" style="left:415.5px;top:37px;font-size:11px;color:#000080;font-family:'Liberation Sans',sans-serif;-webkit-text-stroke:0.2px #000080;">?</span>
<div style="left:7px;top:59px;width:1165px;height:515px;border-style:solid;border-width:1px;border-color:#a0a0a0 #ffffff #ffffff #a0a0a0;"></div>
<div style="left:8px;top:60px;width:1163px;height:513px;border-style:solid;border-width:1px;border-color:#696969 #ffffff #ffffff #696969;"></div>
<div style="left:9px;top:81px;width:1161px;height:491px;border-style:solid;border-width:1px;border-color:#ffffff #696969 #696969 #ffffff;"></div>
<div style="left:10px;top:82px;width:1159px;height:489px;border-style:solid;border-width:0 1px 1px 1px;border-color:#a0a0a0 #a0a0a0 #a0a0a0 #e3e3e3;"></div>
<div style="left:9px;top:61px;width:1px;height:21px;background:#ffffff;"></div>
<div style="left:10px;top:62px;width:1px;height:20px;background:#e3e3e3;"></div>
<div style="left:11px;top:63px;width:54px;height:18px;background:#f0f0f0;border-style:solid;border-width:1px 2px 0 1px;border-color:#ffffff #696969 #ffffff #ffffff;border-radius:2px 2px 0 0;"><div style="right:-1px;top:1px;width:1px;bottom:0;background:#a0a0a0"></div></div>
<span class="t" style="left:17px;top:66px;letter-spacing:0px;z-index:4">Good ltd</span>
<div style="left:65px;top:63px;width:110px;height:18px;background:#f0f0f0;border-style:solid;border-width:1px 0px 0 1px;border-color:#ffffff #696969 #ffffff #ffffff;border-radius:2px 2px 0 0;"></div>
<span class="t" style="left:71px;top:66px;letter-spacing:0.08px;z-index:4">АЗОВІНВХОЛДИНГ</span>
<div style="left:176px;top:61px;width:66px;height:21px;background:#f0f0f0;border-style:solid;border-width:1px 2px 0 1px;border-color:#ffffff #696969 #ffffff #ffffff;border-radius:2px 2px 0 0;z-index:3;"><div style="right:-1px;top:1px;width:1px;bottom:0;background:#a0a0a0"></div></div>
<span class="t" style="left:183.5px;top:64px;letter-spacing:0px;z-index:4">Барт и КО</span>
<div style="left:242px;top:63px;width:117px;height:18px;background:#f0f0f0;border-style:solid;border-width:1px 2px 0 1px;border-color:#ffffff #696969 #ffffff #ffffff;border-radius:2px 2px 0 0;"><div style="right:-1px;top:1px;width:1px;bottom:0;background:#a0a0a0"></div></div>
<span class="t" style="left:246.5px;top:66px;letter-spacing:0.15px;z-index:4">Дельта Азов-Шіппінг</span>
<div style="left:359px;top:63px;width:104px;height:18px;background:#f0f0f0;border-style:solid;border-width:1px 2px 0 1px;border-color:#ffffff #696969 #ffffff #ffffff;border-radius:2px 2px 0 0;"><div style="right:-1px;top:1px;width:1px;bottom:0;background:#a0a0a0"></div></div>
<span class="t" style="left:365px;top:66px;letter-spacing:-0.07px;z-index:4">Добро моя фирма</span>
<div style="left:463px;top:63px;width:91px;height:18px;background:#f0f0f0;border-style:solid;border-width:1px 2px 0 1px;border-color:#ffffff #696969 #ffffff #ffffff;border-radius:2px 2px 0 0;"><div style="right:-1px;top:1px;width:1px;bottom:0;background:#a0a0a0"></div></div>
<span class="t" style="left:469.5px;top:66px;letter-spacing:0px;z-index:4">Коваленко А.Н.</span>
<div style="left:554px;top:63px;width:71px;height:18px;background:#f0f0f0;border-style:solid;border-width:1px 2px 0 1px;border-color:#ffffff #696969 #ffffff #ffffff;border-radius:2px 2px 0 0;"><div style="right:-1px;top:1px;width:1px;bottom:0;background:#a0a0a0"></div></div>
<span class="t" style="left:560.5px;top:66px;letter-spacing:-0.1px;z-index:4">Кріптолайф</span>
<div style="left:625px;top:63px;width:81px;height:18px;background:#f0f0f0;border-style:solid;border-width:1px 2px 0 1px;border-color:#ffffff #696969 #ffffff #ffffff;border-radius:2px 2px 0 0;"><div style="right:-1px;top:1px;width:1px;bottom:0;background:#a0a0a0"></div></div>
<span class="t" style="left:631px;top:66px;letter-spacing:-0.27px;z-index:4">ТОВ "ПРОТЕ"</span>
<div style="left:706px;top:63px;width:80px;height:18px;background:#f0f0f0;border-style:solid;border-width:1px 2px 0 1px;border-color:#ffffff #696969 #ffffff #ffffff;border-radius:2px 2px 0 0;"><div style="right:-1px;top:1px;width:1px;bottom:0;background:#a0a0a0"></div></div>
<span class="t" style="left:711.7px;top:66px;letter-spacing:0.1px;z-index:4">ЧП "Гуренко"</span>
<div class="btn" style="left:24px;top:91px;width:24px;height:20px;"><i></i><span style="top:2px;">.</span></div>
<div class="btn" style="left:49px;top:91px;width:24px;height:20px;"><i></i><span style="top:2px;letter-spacing:0;font-size:10px;">&lt;</span></div>
<div class="btn" style="left:75px;top:91px;width:24px;height:20px;"><i></i><span style="top:2px;letter-spacing:0;font-size:10px;">&lt;&lt;</span></div>
<div class="btn" style="left:100px;top:91px;width:24px;height:20px;"><i></i><span style="top:2px;letter-spacing:0;font-size:10px;">&lt;&lt;&lt;</span></div>
<div class="btn" style="left:205px;top:91px;width:24px;height:20px;"><i></i><span style="top:2px;letter-spacing:0;font-size:10px;">&gt;&gt;&gt;</span></div>
<div class="btn" style="left:231px;top:91px;width:24px;height:20px;"><i></i><span style="top:2px;letter-spacing:0;font-size:10px;">&gt;&gt;</span></div>
<div class="btn" style="left:256px;top:91px;width:24px;height:20px;"><i></i><span style="top:2px;letter-spacing:0;font-size:10px;">&gt;</span></div>
<div class="btn" style="left:282px;top:91px;width:24px;height:20px;"><i></i><span style="top:2px;">-1</span></div>
<div class="btn" style="left:307px;top:91px;width:107px;height:20px;"><i></i><span style="top:2px;">Інтервал журналу</span></div>
<div class="btn" style="left:415px;top:91px;width:24px;height:20px;"><i></i><span style="top:2px;">+1</span></div>
<div class="btn" style="left:442px;top:91px;width:24px;height:20px;"><i></i><span style="top:2px;letter-spacing:0;font-size:10px;">&lt;</span></div>
<div class="btn" style="left:466px;top:91px;width:24px;height:20px;"><i></i><span style="top:2px;letter-spacing:0;font-size:10px;">&lt;&lt;</span></div>
<div class="btn" style="left:492px;top:91px;width:24px;height:20px;"><i></i><span style="top:2px;letter-spacing:0;font-size:10px;">&lt;&lt;&lt;</span></div>
<div class="btn" style="left:597px;top:91px;width:24px;height:20px;"><i></i><span style="top:2px;letter-spacing:0;font-size:10px;">&gt;&gt;&gt;</span></div>
<div class="btn" style="left:622px;top:91px;width:24px;height:20px;"><i></i><span style="top:2px;letter-spacing:0;font-size:10px;">&gt;&gt;</span></div>
<div class="btn" style="left:648px;top:91px;width:24px;height:20px;"><i></i><span style="top:2px;letter-spacing:0;font-size:10px;">&gt;</span></div>
<div class="btn" style="left:673px;top:91px;width:24px;height:20px;"><i></i><span style="top:2px;">.</span></div>
<div class="btn" style="left:724px;top:91px;width:24px;height:20px;"><i></i><span style="top:2px;"></span><svg style="position:absolute;left:2px;top:2px" width="18" height="14" viewBox="0 0 18 14" shape-rendering="crispEdges"><defs><linearGradient id="wga" x1="0" x2="1" y1="0" y2="0"><stop offset="0" stop-color="#b4c098"/><stop offset="0.45" stop-color="#f6f65a"/><stop offset="1" stop-color="#ffff9a"/></linearGradient></defs><rect width="18" height="14" fill="#fff"/><rect x="0" y="0" width="7" height="14" fill="url(#wga)"/><rect x="16" y="0" width="2" height="14" fill="#c9c3c5"/><path fill="#6f6f00" d="M2 1h1v2h-1zM3 3h1v1h-1zM3 4h1v1h-1zM4 1h1v2h-1zM6 1h1v1h-1zM7 2h1v4h-1zM6 6h1v1h-1zM5 7h1v7h-1z"/><path fill="#ffff66" d="M3 1h1v2h-1z"/><path fill="#9a9aa0" d="M9 1h5v1h-5zM10 2h3v1h-3z"/><path fill="#f3b9c3" d="M8 4h6v1h-6zM8 6h6v1h-6zM8 8h6v1h-6zM8 10h6v1h-6zM8 12h6v1h-6z"/><path fill="#c8202c" d="M14 4h1v1h-1zM13 5h2v1h-2zM13 6h1v1h-1zM12 7h2v1h-2zM12 8h1v1h-1zM11 9h2v1h-2zM7 9h2v1h-2zM8 10h4v1h-4zM9 11h3v1h-3zM9 12h2v1h-2zM10 13h1v1h-1z"/></svg></div>
<div class="btn" style="left:753px;top:91px;width:24px;height:20px;"><i></i><span style="top:2px;"></span><svg style="position:absolute;left:2px;top:2px" width="18" height="14" viewBox="0 0 18 14" shape-rendering="crispEdges"><defs><linearGradient id="wgb" x1="0" x2="1" y1="0" y2="0"><stop offset="0" stop-color="#b4c098"/><stop offset="0.45" stop-color="#f6f65a"/><stop offset="1" stop-color="#ffff9a"/></linearGradient></defs><rect width="18" height="14" fill="#fff"/><rect x="0" y="0" width="7" height="14" fill="url(#wgb)"/><rect x="16" y="0" width="2" height="14" fill="#c9c3c5"/><path fill="#6f6f00" d="M2 1h1v2h-1zM3 3h1v1h-1zM3 4h1v1h-1zM4 1h1v2h-1zM6 1h1v1h-1zM7 2h1v4h-1zM6 6h1v1h-1zM5 7h1v7h-1z"/><path fill="#ffff66" d="M3 1h1v2h-1z"/><path fill="#9a9aa0" d="M9 1h5v1h-5zM10 2h3v1h-3z"/><path fill="#f3b9c3" d="M8 4h6v1h-6zM8 6h6v1h-6zM8 8h6v1h-6zM8 10h6v1h-6zM8 12h6v1h-6z"/><path fill="#b02030" d="M10 5h1v1h-1zM9 6h2v1h-2zM8 7h3v1h-3zM7 8h8v1h-8zM8 9h3v1h-3zM9 10h2v1h-2zM10 11h1v1h-1z"/></svg></div>
<div style="left:126px;top:91px;width:79px;height:21px;background:#fff;border-style:solid;border-width:1px;border-color:#a0a0a0 #f0f0f0 #ffffff #a0a0a0;"><div style="left:0;top:0;right:0;bottom:0;border-style:solid;border-width:1px;border-color:#696969 #696969 #e3e3e3 #696969;"></div><span class="t" style="left:5px;top:4px;letter-spacing:-0.1px">01.01.01</span></div>
<div style="left:188px;top:93px;width:1px;height:18px;background:#696969;"></div>
<div class="btn" style="left:189px;top:93px;width:15px;height:18px;border-color:#fff #696969 #696969 #fff;"><i style="border-color:#e3e3e3 #7c7c7c #7c7c7c #e3e3e3"></i><svg style="position:absolute;left:1px;top:4px;" width="9" height="9" viewBox="0 0 9 9" shape-rendering="crispEdges"><path fill="#000000" d="M0 0h9v1h-9zM0 1h1v1h-1zM3 1h1v1h-1zM5 1h1v1h-1zM8 1h1v1h-1zM0 2h4v1h-4zM5 2h4v1h-4zM0 3h1v1h-1zM8 3h1v1h-1zM0 4h2v1h-2zM3 4h1v1h-1zM5 4h1v1h-1zM7 4h2v1h-2zM0 5h1v1h-1zM8 5h1v1h-1zM0 6h2v1h-2zM3 6h1v1h-1zM5 6h1v1h-1zM7 6h2v1h-2zM0 7h1v1h-1zM8 7h1v1h-1zM0 8h9v1h-9z"/><path fill="#ffffff" d="M1 1h2v1h-2zM4 1h1v1h-1zM6 1h2v1h-2zM4 2h1v1h-1zM1 3h7v1h-7zM2 4h1v1h-1zM4 4h1v1h-1zM6 4h1v1h-1zM1 5h7v1h-7zM2 6h1v1h-1zM4 6h1v1h-1zM6 6h1v1h-1zM1 7h7v1h-7z"/></svg></div>
<div style="left:517px;top:91px;width:79px;height:21px;background:#fff;border-style:solid;border-width:1px;border-color:#a0a0a0 #f0f0f0 #ffffff #a0a0a0;"><div style="left:0;top:0;right:0;bottom:0;border-style:solid;border-width:1px;border-color:#696969 #696969 #e3e3e3 #696969;"></div><span class="t" style="left:5px;top:4px;letter-spacing:-0.1px">31.12.24</span></div>
<div style="left:579px;top:93px;width:1px;height:18px;background:#696969;"></div>
<div class="btn" style="left:580px;top:93px;width:15px;height:18px;border-color:#fff #696969 #696969 #fff;"><i style="border-color:#e3e3e3 #7c7c7c #7c7c7c #e3e3e3"></i><svg style="position:absolute;left:1px;top:4px;" width="9" height="9" viewBox="0 0 9 9" shape-rendering="crispEdges"><path fill="#000000" d="M0 0h9v1h-9zM0 1h1v1h-1zM3 1h1v1h-1zM5 1h1v1h-1zM8 1h1v1h-1zM0 2h4v1h-4zM5 2h4v1h-4zM0 3h1v1h-1zM8 3h1v1h-1zM0 4h2v1h-2zM3 4h1v1h-1zM5 4h1v1h-1zM7 4h2v1h-2zM0 5h1v1h-1zM8 5h1v1h-1zM0 6h2v1h-2zM3 6h1v1h-1zM5 6h1v1h-1zM7 6h2v1h-2zM0 7h1v1h-1zM8 7h1v1h-1zM0 8h9v1h-9z"/><path fill="#ffffff" d="M1 1h2v1h-2zM4 1h1v1h-1zM6 1h2v1h-2zM4 2h1v1h-1zM1 3h7v1h-7zM2 4h1v1h-1zM4 4h1v1h-1zM6 4h1v1h-1zM1 5h7v1h-7zM2 6h1v1h-1zM4 6h1v1h-1zM6 6h1v1h-1zM1 7h7v1h-7z"/></svg></div>
<span class="t" style="left:499px;top:117px;color:#0000ff;letter-spacing:0.11px;">Есть подчиненные документы!</span>
<div style="left:16px;top:138px;width:1147px;height:343px;background:#fff;border-style:solid;border-width:1px;border-color:#696969 #696969 #696969 #696969;"></div>
<div style="left:17px;top:139px;width:1145px;height:341px;border-style:solid;border-width:1px 1px 1px 1px;border-color:#a0a0a0 #ffffff #e3e3e3 #a0a0a0;"></div>
<div style="left:1144px;top:140px;width:17px;height:339px;background:#f0f0f0;"></div>
<div style="left:1151px;top:444px;width:2px;height:17px;background:#808080;"></div>
<div class="clip" style="left:18px;top:140px;width:1125px;height:339px;">
<div class="hc" style="left:0px;top:0px;width:21px;height:30px;"></div>
<div class="hc" style="left:22px;top:0px;width:25px;height:30px;"></div>
<div style="left:23px;top:15px;width:23px;height:1px;background:#7a7a7a;"></div>
<div style="left:23px;top:14px;width:23px;height:1px;background:#fff;"></div>
<div style="left:23px;top:16px;width:23px;height:1px;background:#fff;"></div>
<span class="t b" style="left:26px;top:1px;">В...</span>
<div class="hc" style="left:48px;top:0px;width:86px;height:30px;"></div>
<span class="t b" style="left:52px;top:1px;">Номер</span>
<div class="hc" style="left:135px;top:0px;width:84px;height:30px;"></div>
<span class="t b" style="left:139px;top:1px;">Дата</span>
<div class="hc" style="left:220px;top:0px;width:106px;height:30px;"></div>
<span class="t b" style="left:224px;top:1px;">Дата Пост.</span>
<div class="hc" style="left:327px;top:0px;width:82px;height:30px;"></div>
<span class="t b" style="left:331px;top:1px;">№ (пост.)</span>
<div class="hc" style="left:410px;top:0px;width:117px;height:30px;"></div>
<div style="left:411px;top:15px;width:115px;height:1px;background:#7a7a7a;"></div>
<div style="left:411px;top:14px;width:115px;height:1px;background:#fff;"></div>
<div style="left:411px;top:16px;width:115px;height:1px;background:#fff;"></div>
<div style="left:467px;top:16px;width:1px;height:13px;background:#7a7a7a;"></div>
<div style="left:466px;top:16px;width:1px;height:13px;background:#fff;"></div>
<div style="left:468px;top:16px;width:1px;height:13px;background:#fff;"></div>
<span class="t b" style="left:414px;top:16px;">Рахунок</span>
<span class="t b" style="left:471px;top:16px;">Що?</span>
<span class="t b" style="left:414px;top:1px;">Склад</span>
<div class="hc" style="left:528px;top:0px;width:171px;height:30px;"></div>
<div style="left:529px;top:15px;width:169px;height:1px;background:#7a7a7a;"></div>
<div style="left:529px;top:14px;width:169px;height:1px;background:#fff;"></div>
<div style="left:529px;top:16px;width:169px;height:1px;background:#fff;"></div>
<span class="t b" style="left:532px;top:16px;">Підзвіт</span>
<span class="t b" style="left:532px;top:1px;">Контрагент</span>
<div class="hc" style="left:700px;top:0px;width:90px;height:30px;"></div>
<span class="t b" style="left:704px;top:1px;">Сума вал -</span>
<div class="hc" style="left:791px;top:0px;width:82px;height:30px;"></div>
<span class="t b" style="left:795px;top:1px;">ПДВ</span>
<div class="hc" style="left:874px;top:0px;width:107px;height:30px;"></div>
<div style="left:875px;top:15px;width:105px;height:1px;background:#7a7a7a;"></div>
<div style="left:875px;top:14px;width:105px;height:1px;background:#fff;"></div>
<div style="left:875px;top:16px;width:105px;height:1px;background:#fff;"></div>
<span class="t b" style="left:878px;top:16px;">Зменьш.витр.</span>
<span class="t b" style="left:878px;top:1px;">Сума +</span>
<div class="hc" style="left:982px;top:0px;width:161px;height:30px;"></div>
<div style="left:983px;top:15px;width:159px;height:1px;background:#7a7a7a;"></div>
<div style="left:983px;top:14px;width:159px;height:1px;background:#fff;"></div>
<div style="left:983px;top:16px;width:159px;height:1px;background:#fff;"></div>
<span class="t b" style="left:986px;top:16px;">Примітка</span>
<span class="t b" style="left:986px;top:1px;">Автор</span>
<div style="left:1124px;top:29px;width:1px;height:3px;background:#7a7a7a;z-index:2;"></div>
<div class="hc" style="left:0px;top:31px;width:21px;height:31px;"></div>
<div class="dc" style="left:22px;top:31px;width:25px;height:31px;"></div>
<div class="dc" style="left:48px;top:31px;width:86px;height:31px;"></div>
<div class="dc" style="left:135px;top:31px;width:84px;height:31px;"></div>
<div class="dc" style="left:220px;top:31px;width:106px;height:31px;"></div>
<div class="dc" style="left:327px;top:31px;width:82px;height:31px;"></div>
<div class="dc" style="left:410px;top:31px;width:117px;height:31px;"></div>
<div class="dc" style="left:528px;top:31px;width:171px;height:31px;"></div>
<div class="dc" style="left:700px;top:31px;width:90px;height:31px;"></div>
<div class="dc" style="left:791px;top:31px;width:82px;height:31px;"></div>
<div class="dc" style="left:874px;top:31px;width:107px;height:31px;"></div>
<div class="dc" style="left:982px;top:31px;width:161px;height:31px;"></div>
<div style="left:5px;top:32px;width:13px;height:14px;background:rgba(255,255,255,.75)"></div>
<svg style="position:absolute;left:6px;top:32px;" width="13" height="13" viewBox="0 0 13 13" shape-rendering="crispEdges"><path fill="#ff00ff" d="M11 0h1v1h-1zM10 1h1v1h-1zM9 2h1v1h-1zM2 3h2v1h-2zM8 3h1v1h-1zM3 4h2v1h-2zM6 4h2v1h-2zM4 5h4v1h-4zM5 6h2v1h-2zM5 7h1v1h-1z"/><path fill="#808000" d="M0 1h8v1h-8zM0 2h1v1h-1zM7 2h1v1h-1zM0 3h1v1h-1zM7 3h1v1h-1zM0 4h1v1h-1zM8 4h2v1h-2zM0 5h1v1h-1zM0 6h1v1h-1zM0 7h1v1h-1zM0 8h1v1h-1zM0 9h1v1h-1zM0 10h1v1h-1zM0 11h1v1h-1zM0 12h1v1h-1z"/><path fill="#ffffff" d="M1 2h1v1h-1zM3 2h1v1h-1zM5 2h1v1h-1zM4 3h1v1h-1zM6 3h1v1h-1zM1 4h1v1h-1zM5 4h1v1h-1zM2 5h1v1h-1zM8 5h1v1h-1zM1 6h1v1h-1zM3 6h1v1h-1zM7 6h1v1h-1zM9 6h1v1h-1zM2 7h1v1h-1zM4 7h1v1h-1zM8 7h1v1h-1zM1 8h1v1h-1zM3 8h1v1h-1zM7 8h1v1h-1zM9 8h1v1h-1zM2 9h1v1h-1zM4 9h1v1h-1zM6 9h1v1h-1zM8 9h1v1h-1zM1 10h1v1h-1zM3 10h1v1h-1zM5 10h1v1h-1zM7 10h1v1h-1zM9 10h1v1h-1zM2 11h1v1h-1zM4 11h1v1h-1zM6 11h1v1h-1zM8 11h1v1h-1z"/><path fill="#30ffff" d="M2 2h1v1h-1zM4 2h1v1h-1zM6 2h1v1h-1zM1 3h1v1h-1zM5 3h1v1h-1zM2 4h1v1h-1zM1 5h1v1h-1zM3 5h1v1h-1zM9 5h1v1h-1zM2 6h1v1h-1zM4 6h1v1h-1zM8 6h1v1h-1zM1 7h1v1h-1zM3 7h1v1h-1zM7 7h1v1h-1zM9 7h1v1h-1zM2 8h1v1h-1zM4 8h1v1h-1zM6 8h1v1h-1zM8 8h1v1h-1zM1 9h1v1h-1zM3 9h1v1h-1zM7 9h1v1h-1zM9 9h1v1h-1zM2 10h1v1h-1zM4 10h1v1h-1zM6 10h1v1h-1zM8 10h1v1h-1zM1 11h1v1h-1zM3 11h1v1h-1zM5 11h1v1h-1zM7 11h1v1h-1zM9 11h1v1h-1z"/><path fill="#c0c0c0" d="M8 2h1v1h-1zM9 3h1v1h-1z"/><path fill="#000000" d="M10 3h1v1h-1zM10 4h1v1h-1zM10 5h1v1h-1zM10 6h1v1h-1zM10 7h1v1h-1zM10 8h1v1h-1zM10 9h1v1h-1zM10 10h1v1h-1zM10 11h1v1h-1zM1 12h10v1h-10z"/><path fill="#a000a0" d="M6 7h1v1h-1zM5 8h1v1h-1zM5 9h1v1h-1z"/></svg>
<span class="t" style="left:52px;top:32px;">ПН-0000003</span>
<span class="t" style="left:139px;top:32px;">04.12.04</span>
<span class="t" style="left:229.5px;top:32px;">.</span>
<span class="t" style="left:239px;top:32px;">.</span>
<div class="clip" style="left:411px;top:32px;width:115px;height:29px;">
<span class="t" style="left:3px;top:0px;">Иванов Г. П.</span>
<span class="t" style="left:3px;top:15px;">631</span>
<span class="t" style="left:60px;top:15px;">ОЗ, НМА, і</span>
</div>
<span class="t" style="left:532px;top:32px;">Барт и КО</span>
<span class="t" style="left:700px;top:32px;width:86px;text-align:right;letter-spacing:-0.2px;">171,075.00</span>
<span class="t" style="left:791px;top:32px;width:78px;text-align:right;letter-spacing:-0.2px;">34,215.000</span>
<span class="t" style="left:874px;top:32px;width:103px;text-align:right;letter-spacing:-0.2px;">205,290.000</span>
<div class="clip" style="left:983px;top:32px;width:140px;height:29px;">
<span class="t" style="left:3px;top:0px;">Админов</span>
<span class="t" style="left:3px;top:15px;">Покупка НМА и прочих нео</span>
</div>
<div class="hc" style="left:0px;top:61px;width:21px;height:31px;"></div>
<div class="dc" style="left:22px;top:61px;width:25px;height:31px;"></div>
<div class="dc" style="left:48px;top:61px;width:86px;height:31px;"></div>
<div class="dc" style="left:135px;top:61px;width:84px;height:31px;"></div>
<div class="dc" style="left:220px;top:61px;width:106px;height:31px;"></div>
<div class="dc" style="left:327px;top:61px;width:82px;height:31px;"></div>
<div class="dc" style="left:410px;top:61px;width:117px;height:31px;"></div>
<div class="dc" style="left:528px;top:61px;width:171px;height:31px;"></div>
<div class="dc" style="left:700px;top:61px;width:90px;height:31px;"></div>
<div class="dc" style="left:791px;top:61px;width:82px;height:31px;"></div>
<div class="dc" style="left:874px;top:61px;width:107px;height:31px;"></div>
<div class="dc" style="left:982px;top:61px;width:161px;height:31px;"></div>
<div style="left:5px;top:62px;width:13px;height:14px;background:rgba(255,255,255,.75)"></div>
<svg style="position:absolute;left:6px;top:62px;" width="13" height="13" viewBox="0 0 13 13" shape-rendering="crispEdges"><path fill="#ff00ff" d="M11 0h1v1h-1zM10 1h1v1h-1zM9 2h1v1h-1zM2 3h2v1h-2zM8 3h1v1h-1zM3 4h2v1h-2zM6 4h2v1h-2zM4 5h4v1h-4zM5 6h2v1h-2zM5 7h1v1h-1z"/><path fill="#808000" d="M0 1h8v1h-8zM0 2h1v1h-1zM7 2h1v1h-1zM0 3h1v1h-1zM7 3h1v1h-1zM0 4h1v1h-1zM8 4h2v1h-2zM0 5h1v1h-1zM0 6h1v1h-1zM0 7h1v1h-1zM0 8h1v1h-1zM0 9h1v1h-1zM0 10h1v1h-1zM0 11h1v1h-1zM0 12h1v1h-1z"/><path fill="#ffffff" d="M1 2h1v1h-1zM3 2h1v1h-1zM5 2h1v1h-1zM4 3h1v1h-1zM6 3h1v1h-1zM1 4h1v1h-1zM5 4h1v1h-1zM2 5h1v1h-1zM8 5h1v1h-1zM1 6h1v1h-1zM3 6h1v1h-1zM7 6h1v1h-1zM9 6h1v1h-1zM2 7h1v1h-1zM4 7h1v1h-1zM8 7h1v1h-1zM1 8h1v1h-1zM3 8h1v1h-1zM7 8h1v1h-1zM9 8h1v1h-1zM2 9h1v1h-1zM4 9h1v1h-1zM6 9h1v1h-1zM8 9h1v1h-1zM1 10h1v1h-1zM3 10h1v1h-1zM5 10h1v1h-1zM7 10h1v1h-1zM9 10h1v1h-1zM2 11h1v1h-1zM4 11h1v1h-1zM6 11h1v1h-1zM8 11h1v1h-1z"/><path fill="#30ffff" d="M2 2h1v1h-1zM4 2h1v1h-1zM6 2h1v1h-1zM1 3h1v1h-1zM5 3h1v1h-1zM2 4h1v1h-1zM1 5h1v1h-1zM3 5h1v1h-1zM9 5h1v1h-1zM2 6h1v1h-1zM4 6h1v1h-1zM8 6h1v1h-1zM1 7h1v1h-1zM3 7h1v1h-1zM7 7h1v1h-1zM9 7h1v1h-1zM2 8h1v1h-1zM4 8h1v1h-1zM6 8h1v1h-1zM8 8h1v1h-1zM1 9h1v1h-1zM3 9h1v1h-1zM7 9h1v1h-1zM9 9h1v1h-1zM2 10h1v1h-1zM4 10h1v1h-1zM6 10h1v1h-1zM8 10h1v1h-1zM1 11h1v1h-1zM3 11h1v1h-1zM5 11h1v1h-1zM7 11h1v1h-1zM9 11h1v1h-1z"/><path fill="#c0c0c0" d="M8 2h1v1h-1zM9 3h1v1h-1z"/><path fill="#000000" d="M10 3h1v1h-1zM10 4h1v1h-1zM10 5h1v1h-1zM10 6h1v1h-1zM10 7h1v1h-1zM10 8h1v1h-1zM10 9h1v1h-1zM10 10h1v1h-1zM10 11h1v1h-1zM1 12h10v1h-10z"/><path fill="#a000a0" d="M6 7h1v1h-1zM5 8h1v1h-1zM5 9h1v1h-1z"/></svg>
<span class="t" style="left:52px;top:62px;">ПН-0000005</span>
<span class="t" style="left:139px;top:62px;">20.12.04</span>
<span class="t" style="left:229.5px;top:62px;">.</span>
<span class="t" style="left:239px;top:62px;">.</span>
<div class="clip" style="left:411px;top:62px;width:115px;height:29px;">
<span class="t" style="left:3px;top:0px;">Основной склад</span>
<span class="t" style="left:3px;top:15px;">631</span>
<span class="t" style="left:60px;top:15px;">Запаси (Т</span>
</div>
<span class="t" style="left:532px;top:62px;">Барт и КО</span>
<span class="t" style="left:700px;top:62px;width:86px;text-align:right;letter-spacing:-0.2px;">22,370.00</span>
<span class="t" style="left:791px;top:62px;width:78px;text-align:right;letter-spacing:-0.2px;">4,474.000</span>
<span class="t" style="left:874px;top:62px;width:103px;text-align:right;letter-spacing:-0.2px;">26,844.000</span>
<div class="clip" style="left:983px;top:62px;width:140px;height:29px;">
<span class="t" style="left:3px;top:0px;">Админов</span>
</div>
<div class="hc" style="left:0px;top:91px;width:21px;height:31px;"></div>
<div class="dc" style="left:22px;top:91px;width:25px;height:31px;"></div>
<div class="dc" style="left:48px;top:91px;width:86px;height:31px;"></div>
<div class="dc" style="left:135px;top:91px;width:84px;height:31px;"></div>
<div class="dc" style="left:220px;top:91px;width:106px;height:31px;"></div>
<div class="dc" style="left:327px;top:91px;width:82px;height:31px;"></div>
<div class="dc" style="left:410px;top:91px;width:117px;height:31px;"></div>
<div class="dc" style="left:528px;top:91px;width:171px;height:31px;"></div>
<div class="dc" style="left:700px;top:91px;width:90px;height:31px;"></div>
<div class="dc" style="left:791px;top:91px;width:82px;height:31px;"></div>
<div class="dc" style="left:874px;top:91px;width:107px;height:31px;"></div>
<div class="dc" style="left:982px;top:91px;width:161px;height:31px;"></div>
<div style="left:5px;top:92px;width:13px;height:14px;background:rgba(255,255,255,.75)"></div>
<svg style="position:absolute;left:6px;top:92px;" width="13" height="13" viewBox="0 0 13 13" shape-rendering="crispEdges"><path fill="#ff00ff" d="M11 0h1v1h-1zM10 1h1v1h-1zM9 2h1v1h-1zM2 3h2v1h-2zM8 3h1v1h-1zM3 4h2v1h-2zM6 4h2v1h-2zM4 5h4v1h-4zM5 6h2v1h-2zM5 7h1v1h-1z"/><path fill="#808000" d="M0 1h8v1h-8zM0 2h1v1h-1zM7 2h1v1h-1zM0 3h1v1h-1zM7 3h1v1h-1zM0 4h1v1h-1zM8 4h2v1h-2zM0 5h1v1h-1zM0 6h1v1h-1zM0 7h1v1h-1zM0 8h1v1h-1zM0 9h1v1h-1zM0 10h1v1h-1zM0 11h1v1h-1zM0 12h1v1h-1z"/><path fill="#ffffff" d="M1 2h1v1h-1zM3 2h1v1h-1zM5 2h1v1h-1zM4 3h1v1h-1zM6 3h1v1h-1zM1 4h1v1h-1zM5 4h1v1h-1zM2 5h1v1h-1zM8 5h1v1h-1zM1 6h1v1h-1zM3 6h1v1h-1zM7 6h1v1h-1zM9 6h1v1h-1zM2 7h1v1h-1zM4 7h1v1h-1zM8 7h1v1h-1zM1 8h1v1h-1zM3 8h1v1h-1zM7 8h1v1h-1zM9 8h1v1h-1zM2 9h1v1h-1zM4 9h1v1h-1zM6 9h1v1h-1zM8 9h1v1h-1zM1 10h1v1h-1zM3 10h1v1h-1zM5 10h1v1h-1zM7 10h1v1h-1zM9 10h1v1h-1zM2 11h1v1h-1zM4 11h1v1h-1zM6 11h1v1h-1zM8 11h1v1h-1z"/><path fill="#30ffff" d="M2 2h1v1h-1zM4 2h1v1h-1zM6 2h1v1h-1zM1 3h1v1h-1zM5 3h1v1h-1zM2 4h1v1h-1zM1 5h1v1h-1zM3 5h1v1h-1zM9 5h1v1h-1zM2 6h1v1h-1zM4 6h1v1h-1zM8 6h1v1h-1zM1 7h1v1h-1zM3 7h1v1h-1zM7 7h1v1h-1zM9 7h1v1h-1zM2 8h1v1h-1zM4 8h1v1h-1zM6 8h1v1h-1zM8 8h1v1h-1zM1 9h1v1h-1zM3 9h1v1h-1zM7 9h1v1h-1zM9 9h1v1h-1zM2 10h1v1h-1zM4 10h1v1h-1zM6 10h1v1h-1zM8 10h1v1h-1zM1 11h1v1h-1zM3 11h1v1h-1zM5 11h1v1h-1zM7 11h1v1h-1zM9 11h1v1h-1z"/><path fill="#c0c0c0" d="M8 2h1v1h-1zM9 3h1v1h-1z"/><path fill="#000000" d="M10 3h1v1h-1zM10 4h1v1h-1zM10 5h1v1h-1zM10 6h1v1h-1zM10 7h1v1h-1zM10 8h1v1h-1zM10 9h1v1h-1zM10 10h1v1h-1zM10 11h1v1h-1zM1 12h10v1h-10z"/><path fill="#a000a0" d="M6 7h1v1h-1zM5 8h1v1h-1zM5 9h1v1h-1z"/></svg>
<div style="left:30px;top:92px;width:2px;height:14px;background:#000;"></div>
<div style="left:30px;top:107px;width:2px;height:15px;background:#000;z-index:2;"></div>
<div style="left:36px;top:92px;width:2px;height:14px;background:#000;"></div>
<div style="left:36px;top:107px;width:2px;height:15px;background:#000;z-index:2;"></div>
<span class="t" style="left:52px;top:92px;">ПН-0000001</span>
<span class="t" style="left:139px;top:92px;">03.02.12</span>
<span class="t" style="left:229.5px;top:92px;">.</span>
<span class="t" style="left:239px;top:92px;">.</span>
<span class="t" style="left:331px;top:92px;">ПрН-125</span>
<div class="clip" style="left:411px;top:92px;width:115px;height:29px;">
<span class="t" style="left:3px;top:0px;">Склад готовой проду</span>
<span class="t" style="left:3px;top:15px;">631</span>
<span class="t" style="left:60px;top:15px;">Запаси (Т</span>
</div>
<span class="t" style="left:532px;top:92px;">Барт и КО</span>
<span class="t" style="left:700px;top:92px;width:86px;text-align:right;letter-spacing:-0.2px;">12,698.40</span>
<span class="t" style="left:791px;top:92px;width:78px;text-align:right;letter-spacing:-0.2px;">2,539.680</span>
<span class="t" style="left:874px;top:92px;width:103px;text-align:right;letter-spacing:-0.2px;">15,238.080</span>
<div class="clip" style="left:983px;top:92px;width:140px;height:29px;">
<span class="t" style="left:3px;top:0px;">ГлБухгалтер</span>
</div>
<div class="hc" style="left:0px;top:121px;width:21px;height:31px;"></div>
<div class="dc" style="left:22px;top:121px;width:25px;height:31px;"></div>
<div class="dc" style="left:48px;top:121px;width:86px;height:31px;"></div>
<div class="dc" style="left:135px;top:121px;width:84px;height:31px;"></div>
<div class="dc" style="left:220px;top:121px;width:106px;height:31px;"></div>
<div class="dc" style="left:327px;top:121px;width:82px;height:31px;"></div>
<div class="dc" style="left:410px;top:121px;width:117px;height:31px;"></div>
<div class="dc" style="left:528px;top:121px;width:171px;height:31px;"></div>
<div class="dc" style="left:700px;top:121px;width:90px;height:31px;"></div>
<div class="dc" style="left:791px;top:121px;width:82px;height:31px;"></div>
<div class="dc" style="left:874px;top:121px;width:107px;height:31px;"></div>
<div class="dc" style="left:982px;top:121px;width:161px;height:31px;"></div>
<div style="left:5px;top:122px;width:13px;height:14px;background:rgba(255,255,255,.75)"></div>
<svg style="position:absolute;left:6px;top:122px;" width="13" height="13" viewBox="0 0 13 13" shape-rendering="crispEdges"><path fill="#ff00ff" d="M11 0h1v1h-1zM10 1h1v1h-1zM9 2h1v1h-1zM2 3h2v1h-2zM8 3h1v1h-1zM3 4h2v1h-2zM6 4h2v1h-2zM4 5h4v1h-4zM5 6h2v1h-2zM5 7h1v1h-1z"/><path fill="#808000" d="M0 1h8v1h-8zM0 2h1v1h-1zM7 2h1v1h-1zM0 3h1v1h-1zM7 3h1v1h-1zM0 4h1v1h-1zM8 4h2v1h-2zM0 5h1v1h-1zM0 6h1v1h-1zM0 7h1v1h-1zM0 8h1v1h-1zM0 9h1v1h-1zM0 10h1v1h-1zM0 11h1v1h-1zM0 12h1v1h-1z"/><path fill="#ffffff" d="M1 2h1v1h-1zM3 2h1v1h-1zM5 2h1v1h-1zM4 3h1v1h-1zM6 3h1v1h-1zM1 4h1v1h-1zM5 4h1v1h-1zM2 5h1v1h-1zM8 5h1v1h-1zM1 6h1v1h-1zM3 6h1v1h-1zM7 6h1v1h-1zM9 6h1v1h-1zM2 7h1v1h-1zM4 7h1v1h-1zM8 7h1v1h-1zM1 8h1v1h-1zM3 8h1v1h-1zM7 8h1v1h-1zM9 8h1v1h-1zM2 9h1v1h-1zM4 9h1v1h-1zM6 9h1v1h-1zM8 9h1v1h-1zM1 10h1v1h-1zM3 10h1v1h-1zM5 10h1v1h-1zM7 10h1v1h-1zM9 10h1v1h-1zM2 11h1v1h-1zM4 11h1v1h-1zM6 11h1v1h-1zM8 11h1v1h-1z"/><path fill="#30ffff" d="M2 2h1v1h-1zM4 2h1v1h-1zM6 2h1v1h-1zM1 3h1v1h-1zM5 3h1v1h-1zM2 4h1v1h-1zM1 5h1v1h-1zM3 5h1v1h-1zM9 5h1v1h-1zM2 6h1v1h-1zM4 6h1v1h-1zM8 6h1v1h-1zM1 7h1v1h-1zM3 7h1v1h-1zM7 7h1v1h-1zM9 7h1v1h-1zM2 8h1v1h-1zM4 8h1v1h-1zM6 8h1v1h-1zM8 8h1v1h-1zM1 9h1v1h-1zM3 9h1v1h-1zM7 9h1v1h-1zM9 9h1v1h-1zM2 10h1v1h-1zM4 10h1v1h-1zM6 10h1v1h-1zM8 10h1v1h-1zM1 11h1v1h-1zM3 11h1v1h-1zM5 11h1v1h-1zM7 11h1v1h-1zM9 11h1v1h-1z"/><path fill="#c0c0c0" d="M8 2h1v1h-1zM9 3h1v1h-1z"/><path fill="#000000" d="M10 3h1v1h-1zM10 4h1v1h-1zM10 5h1v1h-1zM10 6h1v1h-1zM10 7h1v1h-1zM10 8h1v1h-1zM10 9h1v1h-1zM10 10h1v1h-1zM10 11h1v1h-1zM1 12h10v1h-10z"/><path fill="#a000a0" d="M6 7h1v1h-1zM5 8h1v1h-1zM5 9h1v1h-1z"/></svg>
<div style="left:30px;top:122px;width:2px;height:14px;background:#000;"></div>
<div style="left:30px;top:137px;width:2px;height:15px;background:#000;z-index:2;"></div>
<div style="left:36px;top:122px;width:2px;height:14px;background:#000;"></div>
<div style="left:36px;top:137px;width:2px;height:15px;background:#000;z-index:2;"></div>
<span class="t" style="left:52px;top:122px;">ПН-0000003</span>
<span class="t" style="left:139px;top:122px;">29.02.12</span>
<span class="t" style="left:229.5px;top:122px;">.</span>
<span class="t" style="left:239px;top:122px;">.</span>
<span class="t" style="left:331px;top:122px;">ПрН-126</span>
<div class="clip" style="left:411px;top:122px;width:115px;height:29px;">
<span class="t" style="left:3px;top:0px;">Склад готовой проду</span>
<span class="t" style="left:3px;top:15px;">631</span>
<span class="t" style="left:60px;top:15px;">Запаси (Т</span>
</div>
<span class="t" style="left:532px;top:122px;">Барт и КО</span>
<span class="t" style="left:700px;top:122px;width:86px;text-align:right;letter-spacing:-0.2px;">11,111.10</span>
<span class="t" style="left:791px;top:122px;width:78px;text-align:right;letter-spacing:-0.2px;">2,222.220</span>
<span class="t" style="left:874px;top:122px;width:103px;text-align:right;letter-spacing:-0.2px;">13,333.320</span>
<div class="clip" style="left:983px;top:122px;width:140px;height:29px;">
<span class="t" style="left:3px;top:0px;">ГлБухгалтер</span>
</div>
<div class="hc" style="left:0px;top:151px;width:21px;height:31px;"></div>
<div class="dc" style="left:22px;top:151px;width:25px;height:31px;"></div>
<div class="dc" style="left:48px;top:151px;width:86px;height:31px;"></div>
<div class="dc" style="left:135px;top:151px;width:84px;height:31px;"></div>
<div class="dc" style="left:220px;top:151px;width:106px;height:31px;"></div>
<div class="dc" style="left:327px;top:151px;width:82px;height:31px;"></div>
<div class="dc" style="left:410px;top:151px;width:117px;height:31px;"></div>
<div class="dc" style="left:528px;top:151px;width:171px;height:31px;"></div>
<div class="dc" style="left:700px;top:151px;width:90px;height:31px;"></div>
<div class="dc" style="left:791px;top:151px;width:82px;height:31px;"></div>
<div class="dc" style="left:874px;top:151px;width:107px;height:31px;"></div>
<div class="dc" style="left:982px;top:151px;width:161px;height:31px;"></div>
<div style="left:5px;top:152px;width:13px;height:14px;background:rgba(255,255,255,.75)"></div>
<svg style="position:absolute;left:6px;top:152px;" width="13" height="13" viewBox="0 0 13 13" shape-rendering="crispEdges"><path fill="#ff00ff" d="M11 0h1v1h-1zM10 1h1v1h-1zM9 2h1v1h-1zM2 3h2v1h-2zM8 3h1v1h-1zM3 4h2v1h-2zM6 4h2v1h-2zM4 5h4v1h-4zM5 6h2v1h-2zM5 7h1v1h-1z"/><path fill="#808000" d="M0 1h8v1h-8zM0 2h1v1h-1zM7 2h1v1h-1zM0 3h1v1h-1zM7 3h1v1h-1zM0 4h1v1h-1zM8 4h2v1h-2zM0 5h1v1h-1zM0 6h1v1h-1zM0 7h1v1h-1zM0 8h1v1h-1zM0 9h1v1h-1zM0 10h1v1h-1zM0 11h1v1h-1zM0 12h1v1h-1z"/><path fill="#ffffff" d="M1 2h1v1h-1zM3 2h1v1h-1zM5 2h1v1h-1zM4 3h1v1h-1zM6 3h1v1h-1zM1 4h1v1h-1zM5 4h1v1h-1zM2 5h1v1h-1zM8 5h1v1h-1zM1 6h1v1h-1zM3 6h1v1h-1zM7 6h1v1h-1zM9 6h1v1h-1zM2 7h1v1h-1zM4 7h1v1h-1zM8 7h1v1h-1zM1 8h1v1h-1zM3 8h1v1h-1zM7 8h1v1h-1zM9 8h1v1h-1zM2 9h1v1h-1zM4 9h1v1h-1zM6 9h1v1h-1zM8 9h1v1h-1zM1 10h1v1h-1zM3 10h1v1h-1zM5 10h1v1h-1zM7 10h1v1h-1zM9 10h1v1h-1zM2 11h1v1h-1zM4 11h1v1h-1zM6 11h1v1h-1zM8 11h1v1h-1z"/><path fill="#30ffff" d="M2 2h1v1h-1zM4 2h1v1h-1zM6 2h1v1h-1zM1 3h1v1h-1zM5 3h1v1h-1zM2 4h1v1h-1zM1 5h1v1h-1zM3 5h1v1h-1zM9 5h1v1h-1zM2 6h1v1h-1zM4 6h1v1h-1zM8 6h1v1h-1zM1 7h1v1h-1zM3 7h1v1h-1zM7 7h1v1h-1zM9 7h1v1h-1zM2 8h1v1h-1zM4 8h1v1h-1zM6 8h1v1h-1zM8 8h1v1h-1zM1 9h1v1h-1zM3 9h1v1h-1zM7 9h1v1h-1zM9 9h1v1h-1zM2 10h1v1h-1zM4 10h1v1h-1zM6 10h1v1h-1zM8 10h1v1h-1zM1 11h1v1h-1zM3 11h1v1h-1zM5 11h1v1h-1zM7 11h1v1h-1zM9 11h1v1h-1z"/><path fill="#c0c0c0" d="M8 2h1v1h-1zM9 3h1v1h-1z"/><path fill="#000000" d="M10 3h1v1h-1zM10 4h1v1h-1zM10 5h1v1h-1zM10 6h1v1h-1zM10 7h1v1h-1zM10 8h1v1h-1zM10 9h1v1h-1zM10 10h1v1h-1zM10 11h1v1h-1zM1 12h10v1h-10z"/><path fill="#a000a0" d="M6 7h1v1h-1zM5 8h1v1h-1zM5 9h1v1h-1z"/></svg>
<span class="t" style="left:52px;top:152px;">ПН-0000003</span>
<span class="t" style="left:139px;top:152px;">01.01.21</span>
<span class="t" style="left:229.5px;top:152px;">.</span>
<span class="t" style="left:239px;top:152px;">.</span>
<span class="t" style="left:331px;top:152px;">566555</span>
<div class="clip" style="left:411px;top:152px;width:115px;height:29px;">
<span class="t" style="left:3px;top:0px;">Основной склад</span>
<span class="t" style="left:3px;top:15px;">631</span>
<span class="t" style="left:60px;top:15px;">Запаси (Т</span>
</div>
<span class="t" style="left:532px;top:152px;">Барт и КО</span>
<span class="t" style="left:700px;top:152px;width:86px;text-align:right;letter-spacing:-0.2px;">385,186.67</span>
<span class="t" style="left:791px;top:152px;width:78px;text-align:right;letter-spacing:-0.2px;">46,328.334</span>
<span class="t" style="left:874px;top:152px;width:103px;text-align:right;letter-spacing:-0.2px;">431,515.004</span>
<div class="clip" style="left:983px;top:152px;width:140px;height:29px;">
<span class="t" style="left:3px;top:0px;">ГлБухгалтер</span>
</div>
<div class="hc" style="left:0px;top:181px;width:21px;height:31px;"></div>
<div class="dc" style="left:22px;top:181px;width:25px;height:31px;"></div>
<div class="dc" style="left:48px;top:181px;width:86px;height:31px;"></div>
<div class="dc" style="left:135px;top:181px;width:84px;height:31px;"></div>
<div class="dc" style="left:220px;top:181px;width:106px;height:31px;"></div>
<div class="dc" style="left:327px;top:181px;width:82px;height:31px;"></div>
<div class="dc" style="left:410px;top:181px;width:117px;height:31px;"></div>
<div class="dc" style="left:528px;top:181px;width:171px;height:31px;"></div>
<div class="dc" style="left:700px;top:181px;width:90px;height:31px;"></div>
<div class="dc" style="left:791px;top:181px;width:82px;height:31px;"></div>
<div class="dc" style="left:874px;top:181px;width:107px;height:31px;"></div>
<div class="dc" style="left:982px;top:181px;width:161px;height:31px;"></div>
<div style="left:5px;top:182px;width:13px;height:14px;background:rgba(255,255,255,.75)"></div>
<svg style="position:absolute;left:6px;top:182px;" width="13" height="13" viewBox="0 0 13 13" shape-rendering="crispEdges"><path fill="#808000" d="M0 1h8v1h-8zM0 2h1v1h-1zM7 2h1v1h-1zM0 3h1v1h-1zM7 3h1v1h-1zM0 4h1v1h-1zM8 4h2v1h-2zM0 5h1v1h-1zM0 6h1v1h-1zM0 7h1v1h-1zM0 8h1v1h-1zM0 9h1v1h-1zM0 10h1v1h-1zM0 11h1v1h-1zM0 12h1v1h-1z"/><path fill="#ffffff" d="M1 2h1v1h-1zM3 2h1v1h-1zM5 2h1v1h-1zM2 3h1v1h-1zM4 3h1v1h-1zM6 3h1v1h-1zM8 3h1v1h-1zM1 4h1v1h-1zM3 4h1v1h-1zM5 4h1v1h-1zM2 5h1v1h-1zM4 5h1v1h-1zM6 5h1v1h-1zM8 5h1v1h-1zM1 6h1v1h-1zM3 6h1v1h-1zM5 6h1v1h-1zM7 6h1v1h-1zM9 6h1v1h-1zM2 7h1v1h-1zM4 7h1v1h-1zM6 7h1v1h-1zM8 7h1v1h-1zM1 8h1v1h-1zM3 8h1v1h-1zM5 8h1v1h-1zM7 8h1v1h-1zM9 8h1v1h-1zM2 9h1v1h-1zM4 9h1v1h-1zM6 9h1v1h-1zM8 9h1v1h-1zM1 10h1v1h-1zM3 10h1v1h-1zM5 10h1v1h-1zM7 10h1v1h-1zM9 10h1v1h-1zM2 11h1v1h-1zM4 11h1v1h-1zM6 11h1v1h-1zM8 11h1v1h-1z"/><path fill="#30ffff" d="M2 2h1v1h-1zM4 2h1v1h-1zM6 2h1v1h-1zM1 3h1v1h-1zM3 3h1v1h-1zM5 3h1v1h-1zM2 4h1v1h-1zM4 4h1v1h-1zM6 4h1v1h-1zM1 5h1v1h-1zM3 5h1v1h-1zM5 5h1v1h-1zM7 5h1v1h-1zM9 5h1v1h-1zM2 6h1v1h-1zM4 6h1v1h-1zM6 6h1v1h-1zM8 6h1v1h-1zM1 7h1v1h-1zM3 7h1v1h-1zM5 7h1v1h-1zM7 7h1v1h-1zM9 7h1v1h-1zM2 8h1v1h-1zM4 8h1v1h-1zM6 8h1v1h-1zM8 8h1v1h-1zM1 9h1v1h-1zM3 9h1v1h-1zM5 9h1v1h-1zM7 9h1v1h-1zM9 9h1v1h-1zM2 10h1v1h-1zM4 10h1v1h-1zM6 10h1v1h-1zM8 10h1v1h-1zM1 11h1v1h-1zM3 11h1v1h-1zM5 11h1v1h-1zM7 11h1v1h-1zM9 11h1v1h-1z"/><path fill="#c0c0c0" d="M8 2h1v1h-1zM9 3h1v1h-1z"/><path fill="#000000" d="M10 3h1v1h-1zM10 4h1v1h-1zM10 5h1v1h-1zM10 6h1v1h-1zM10 7h1v1h-1zM10 8h1v1h-1zM10 9h1v1h-1zM10 10h1v1h-1zM10 11h1v1h-1zM1 12h10v1h-10z"/></svg>
<span class="t" style="left:52px;top:182px;color:#484848;">ПН-0000002</span>
<span class="t" style="left:139px;top:182px;color:#484848;">27.04.23</span>
<span class="t" style="left:229.5px;top:182px;color:#484848;">.</span>
<span class="t" style="left:239px;top:182px;color:#484848;">.</span>
<div class="clip" style="left:411px;top:182px;width:115px;height:29px;">
<span class="t" style="left:3px;top:15px;color:#484848;">631</span>
<span class="t" style="left:60px;top:15px;color:#484848;">Запаси (Т</span>
</div>
<span class="t" style="left:532px;top:182px;color:#484848;">Барт и КО</span>
<span class="t" style="left:700px;top:182px;width:86px;text-align:right;letter-spacing:-0.2px;color:#484848;">943.70</span>
<span class="t" style="left:791px;top:182px;width:78px;text-align:right;letter-spacing:-0.2px;color:#484848;">188.740</span>
<span class="t" style="left:874px;top:182px;width:103px;text-align:right;letter-spacing:-0.2px;color:#484848;">1,132.440</span>
<div class="clip" style="left:983px;top:182px;width:140px;height:29px;">
<span class="t" style="left:3px;top:0px;color:#484848;">ГлБухгалтер</span>
</div>
<div class="hc" style="left:0px;top:211px;width:21px;height:31px;"></div>
<div class="dc" style="left:22px;top:211px;width:25px;height:31px;"></div>
<div class="dc" style="left:48px;top:211px;width:86px;height:31px;"></div>
<div style="left:50px;top:212px;width:82px;height:29px;background:#ccffa3;"></div>
<div class="dc" style="left:135px;top:211px;width:84px;height:31px;"></div>
<div style="left:137px;top:212px;width:80px;height:29px;background:#ccffa3;"></div>
<div class="dc" style="left:220px;top:211px;width:106px;height:31px;"></div>
<div style="left:221px;top:212px;width:104px;height:29px;background:#0078d7;"></div>
<svg style="position:absolute;left:221px;top:212px" width="104" height="29" shape-rendering="crispEdges"><rect x="0.5" y="0.5" width="103" height="28" fill="none" stroke="#ff8728"/><rect x="0.5" y="0.5" width="103" height="28" fill="none" stroke="#000" stroke-dasharray="1 1"/></svg>
<div class="dc" style="left:327px;top:211px;width:82px;height:31px;"></div>
<div style="left:329px;top:212px;width:78px;height:29px;background:#ccffa3;"></div>
<div class="dc" style="left:410px;top:211px;width:117px;height:31px;"></div>
<div style="left:412px;top:212px;width:113px;height:29px;background:#ccffa3;"></div>
<div class="dc" style="left:528px;top:211px;width:171px;height:31px;"></div>
<div style="left:530px;top:212px;width:167px;height:29px;background:#ccffa3;"></div>
<div class="dc" style="left:700px;top:211px;width:90px;height:31px;"></div>
<div style="left:702px;top:212px;width:86px;height:29px;background:#ccffa3;"></div>
<div class="dc" style="left:791px;top:211px;width:82px;height:31px;"></div>
<div style="left:793px;top:212px;width:78px;height:29px;background:#ccffa3;"></div>
<div class="dc" style="left:874px;top:211px;width:107px;height:31px;"></div>
<div style="left:876px;top:212px;width:103px;height:29px;background:#ccffa3;"></div>
<div class="dc" style="left:982px;top:211px;width:161px;height:31px;"></div>
<div style="left:984px;top:212px;width:157px;height:29px;background:#ccffa3;"></div>
<div style="left:5px;top:212px;width:13px;height:14px;background:rgba(255,255,255,.75)"></div>
<svg style="position:absolute;left:6px;top:212px;" width="13" height="13" viewBox="0 0 13 13" shape-rendering="crispEdges"><path fill="#ff00ff" d="M11 0h1v1h-1zM10 1h1v1h-1zM9 2h1v1h-1zM2 3h2v1h-2zM8 3h1v1h-1zM3 4h2v1h-2zM6 4h2v1h-2zM4 5h4v1h-4zM5 6h2v1h-2zM5 7h1v1h-1z"/><path fill="#808000" d="M0 1h8v1h-8zM0 2h1v1h-1zM7 2h1v1h-1zM0 3h1v1h-1zM7 3h1v1h-1zM0 4h1v1h-1zM8 4h2v1h-2zM0 5h1v1h-1zM0 6h1v1h-1zM0 7h1v1h-1zM0 8h1v1h-1zM0 9h1v1h-1zM0 10h1v1h-1zM0 11h1v1h-1zM0 12h1v1h-1z"/><path fill="#ffffff" d="M1 2h1v1h-1zM3 2h1v1h-1zM5 2h1v1h-1zM4 3h1v1h-1zM6 3h1v1h-1zM1 4h1v1h-1zM5 4h1v1h-1zM2 5h1v1h-1zM8 5h1v1h-1zM1 6h1v1h-1zM3 6h1v1h-1zM7 6h1v1h-1zM9 6h1v1h-1zM2 7h1v1h-1zM4 7h1v1h-1zM8 7h1v1h-1zM1 8h1v1h-1zM3 8h1v1h-1zM7 8h1v1h-1zM9 8h1v1h-1zM2 9h1v1h-1zM4 9h1v1h-1zM6 9h1v1h-1zM8 9h1v1h-1zM1 10h1v1h-1zM3 10h1v1h-1zM5 10h1v1h-1zM7 10h1v1h-1zM9 10h1v1h-1zM2 11h1v1h-1zM4 11h1v1h-1zM6 11h1v1h-1zM8 11h1v1h-1z"/><path fill="#30ffff" d="M2 2h1v1h-1zM4 2h1v1h-1zM6 2h1v1h-1zM1 3h1v1h-1zM5 3h1v1h-1zM2 4h1v1h-1zM1 5h1v1h-1zM3 5h1v1h-1zM9 5h1v1h-1zM2 6h1v1h-1zM4 6h1v1h-1zM8 6h1v1h-1zM1 7h1v1h-1zM3 7h1v1h-1zM7 7h1v1h-1zM9 7h1v1h-1zM2 8h1v1h-1zM4 8h1v1h-1zM6 8h1v1h-1zM8 8h1v1h-1zM1 9h1v1h-1zM3 9h1v1h-1zM7 9h1v1h-1zM9 9h1v1h-1zM2 10h1v1h-1zM4 10h1v1h-1zM6 10h1v1h-1zM8 10h1v1h-1zM1 11h1v1h-1zM3 11h1v1h-1zM5 11h1v1h-1zM7 11h1v1h-1zM9 11h1v1h-1z"/><path fill="#c0c0c0" d="M8 2h1v1h-1zM9 3h1v1h-1z"/><path fill="#000000" d="M10 3h1v1h-1zM10 4h1v1h-1zM10 5h1v1h-1zM10 6h1v1h-1zM10 7h1v1h-1zM10 8h1v1h-1zM10 9h1v1h-1zM10 10h1v1h-1zM10 11h1v1h-1zM1 12h10v1h-10z"/><path fill="#a000a0" d="M6 7h1v1h-1zM5 8h1v1h-1zM5 9h1v1h-1z"/></svg>
<span class="t" style="left:52px;top:212px;">ПН-0000004</span>
<span class="t" style="left:139px;top:212px;">02.07.23</span>
<span class="t" style="left:229.5px;top:212px;color:#fff;">.</span>
<span class="t" style="left:239px;top:212px;color:#fff;">.</span>
<div class="clip" style="left:411px;top:212px;width:115px;height:29px;">
<span class="t" style="left:3px;top:0px;">Основной склад</span>
<span class="t" style="left:3px;top:15px;">631</span>
<span class="t" style="left:60px;top:15px;">Запаси (Т</span>
</div>
<span class="t" style="left:532px;top:212px;">Барт и КО</span>
<span class="t" style="left:700px;top:212px;width:86px;text-align:right;letter-spacing:-0.2px;">385,186.67</span>
<span class="t" style="left:791px;top:212px;width:78px;text-align:right;letter-spacing:-0.2px;">46,328.334</span>
<span class="t" style="left:874px;top:212px;width:103px;text-align:right;letter-spacing:-0.2px;">431,515.004</span>
<div class="clip" style="left:983px;top:212px;width:140px;height:29px;">
<span class="t" style="left:3px;top:0px;">ГлБухгалтер</span>
</div>
<div style="left:23px;top:226px;width:23px;height:1px;background:#7a7a7a;"></div>
<div style="left:411px;top:226px;width:115px;height:1px;background:#7a7a7a;"></div>
<div style="left:467px;top:226px;width:1px;height:15px;background:#7a7a7a;"></div>
<div style="left:529px;top:226px;width:169px;height:1px;background:#7a7a7a;"></div>
<div style="left:875px;top:226px;width:105px;height:1px;background:#7a7a7a;"></div>
<div style="left:983px;top:226px;width:143px;height:1px;background:#7a7a7a;"></div>
<div class="hc" style="left:0px;top:241px;width:21px;height:31px;"></div>
<div class="dc" style="left:22px;top:241px;width:25px;height:31px;"></div>
<div class="dc" style="left:48px;top:241px;width:86px;height:31px;"></div>
<div class="dc" style="left:135px;top:241px;width:84px;height:31px;"></div>
<div class="dc" style="left:220px;top:241px;width:106px;height:31px;"></div>
<div class="dc" style="left:327px;top:241px;width:82px;height:31px;"></div>
<div class="dc" style="left:410px;top:241px;width:117px;height:31px;"></div>
<div class="dc" style="left:528px;top:241px;width:171px;height:31px;"></div>
<div class="dc" style="left:700px;top:241px;width:90px;height:31px;"></div>
<div class="dc" style="left:791px;top:241px;width:82px;height:31px;"></div>
<div class="dc" style="left:874px;top:241px;width:107px;height:31px;"></div>
<div class="dc" style="left:982px;top:241px;width:161px;height:31px;"></div>
<div class="hc" style="left:0px;top:271px;width:21px;height:31px;"></div>
<div class="dc" style="left:22px;top:271px;width:25px;height:31px;"></div>
<div class="dc" style="left:48px;top:271px;width:86px;height:31px;"></div>
<div class="dc" style="left:135px;top:271px;width:84px;height:31px;"></div>
<div class="dc" style="left:220px;top:271px;width:106px;height:31px;"></div>
<div class="dc" style="left:327px;top:271px;width:82px;height:31px;"></div>
<div class="dc" style="left:410px;top:271px;width:117px;height:31px;"></div>
<div class="dc" style="left:528px;top:271px;width:171px;height:31px;"></div>
<div class="dc" style="left:700px;top:271px;width:90px;height:31px;"></div>
<div class="dc" style="left:791px;top:271px;width:82px;height:31px;"></div>
<div class="dc" style="left:874px;top:271px;width:107px;height:31px;"></div>
<div class="dc" style="left:982px;top:271px;width:161px;height:31px;"></div>
<div class="hc" style="left:0px;top:301px;width:21px;height:31px;"></div>
<div class="dc" style="left:22px;top:301px;width:25px;height:31px;"></div>
<div class="dc" style="left:48px;top:301px;width:86px;height:31px;"></div>
<div class="dc" style="left:135px;top:301px;width:84px;height:31px;"></div>
<div class="dc" style="left:220px;top:301px;width:106px;height:31px;"></div>
<div class="dc" style="left:327px;top:301px;width:82px;height:31px;"></div>
<div class="dc" style="left:410px;top:301px;width:117px;height:31px;"></div>
<div class="dc" style="left:528px;top:301px;width:171px;height:31px;"></div>
<div class="dc" style="left:700px;top:301px;width:90px;height:31px;"></div>
<div class="dc" style="left:791px;top:301px;width:82px;height:31px;"></div>
<div class="dc" style="left:874px;top:301px;width:107px;height:31px;"></div>
<div class="dc" style="left:982px;top:301px;width:161px;height:31px;"></div>
<div class="hc" style="left:0px;top:331px;width:21px;height:31px;"></div>
<div class="dc" style="left:22px;top:331px;width:25px;height:31px;"></div>
<div class="dc" style="left:48px;top:331px;width:86px;height:31px;"></div>
<div class="dc" style="left:135px;top:331px;width:84px;height:31px;"></div>
<div class="dc" style="left:220px;top:331px;width:106px;height:31px;"></div>
<div class="dc" style="left:327px;top:331px;width:82px;height:31px;"></div>
<div class="dc" style="left:410px;top:331px;width:117px;height:31px;"></div>
<div class="dc" style="left:528px;top:331px;width:171px;height:31px;"></div>
<div class="dc" style="left:700px;top:331px;width:90px;height:31px;"></div>
<div class="dc" style="left:791px;top:331px;width:82px;height:31px;"></div>
<div class="dc" style="left:874px;top:331px;width:107px;height:31px;"></div>
<div class="dc" style="left:982px;top:331px;width:161px;height:31px;"></div>
<div style="left:0px;top:0px;width:1125px;height:1px;background:#7a7a7a;"></div>
<div style="left:0px;top:29px;width:1125px;height:1px;background:#7a7a7a;"></div>
<div style="left:0px;top:31px;width:1125px;height:1px;background:#7a7a7a;"></div>
<div style="left:0px;top:61px;width:1125px;height:1px;background:#7a7a7a;"></div>
<div style="left:0px;top:91px;width:1125px;height:1px;background:#7a7a7a;"></div>
<div style="left:0px;top:121px;width:1125px;height:1px;background:#7a7a7a;"></div>
<div style="left:0px;top:151px;width:1125px;height:1px;background:#7a7a7a;"></div>
<div style="left:0px;top:181px;width:1125px;height:1px;background:#7a7a7a;"></div>
<div style="left:0px;top:211px;width:1125px;height:1px;background:#7a7a7a;"></div>
<div style="left:0px;top:241px;width:1125px;height:1px;background:#7a7a7a;"></div>
<div style="left:0px;top:271px;width:1125px;height:1px;background:#7a7a7a;"></div>
<div style="left:0px;top:301px;width:1125px;height:1px;background:#7a7a7a;"></div>
<div style="left:0px;top:331px;width:1125px;height:1px;background:#7a7a7a;"></div>
<div style="left:0px;top:0px;width:1px;height:339px;background:#7a7a7a;"></div>
<div style="left:20px;top:0px;width:1px;height:339px;background:#7a7a7a;"></div>
<div style="left:22px;top:0px;width:1px;height:339px;background:#7a7a7a;"></div>
<div style="left:46px;top:0px;width:1px;height:339px;background:#7a7a7a;"></div>
<div style="left:48px;top:0px;width:1px;height:339px;background:#7a7a7a;"></div>
<div style="left:133px;top:0px;width:1px;height:339px;background:#7a7a7a;"></div>
<div style="left:135px;top:0px;width:1px;height:339px;background:#7a7a7a;"></div>
<div style="left:218px;top:0px;width:1px;height:339px;background:#7a7a7a;"></div>
<div style="left:220px;top:0px;width:1px;height:339px;background:#7a7a7a;"></div>
<div style="left:325px;top:0px;width:1px;height:339px;background:#7a7a7a;"></div>
<div style="left:327px;top:0px;width:1px;height:339px;background:#7a7a7a;"></div>
<div style="left:408px;top:0px;width:1px;height:339px;background:#7a7a7a;"></div>
<div style="left:410px;top:0px;width:1px;height:339px;background:#7a7a7a;"></div>
<div style="left:526px;top:0px;width:1px;height:339px;background:#7a7a7a;"></div>
<div style="left:528px;top:0px;width:1px;height:339px;background:#7a7a7a;"></div>
<div style="left:698px;top:0px;width:1px;height:339px;background:#7a7a7a;"></div>
<div style="left:700px;top:0px;width:1px;height:339px;background:#7a7a7a;"></div>
<div style="left:789px;top:0px;width:1px;height:339px;background:#7a7a7a;"></div>
<div style="left:791px;top:0px;width:1px;height:339px;background:#7a7a7a;"></div>
<div style="left:872px;top:0px;width:1px;height:339px;background:#7a7a7a;"></div>
<div style="left:874px;top:0px;width:1px;height:339px;background:#7a7a7a;"></div>
<div style="left:980px;top:0px;width:1px;height:339px;background:#7a7a7a;"></div>
<div style="left:982px;top:0px;width:1px;height:339px;background:#7a7a7a;"></div>
</div>
<div style="left:22px;top:493px;width:904px;height:42px;border:1px solid #a0a0a0;box-shadow:inset 1px 1px 0 #fff, 1px 1px 0 #fff;"></div>
<div style="left:28px;top:487px;width:144px;height:13px;background:#f0f0f0;"></div>
<span class="t" style="left:30px;top:487px;letter-spacing:0.17px;">Використовувати закладки</span>
<svg style="position:absolute;left:31px;top:509px" width="12" height="12" viewBox="0 0 12 12"><circle cx="6" cy="6" r="5.5" fill="#fff"/><path d="M10.2 1.8A5.9 5.9 0 0 0 1.8 10.2" fill="none" stroke="#8c8c8c" stroke-width="1.1"/><path d="M9.5 2.5A4.9 4.9 0 0 0 2.5 9.5" fill="none" stroke="#5a5a5a" stroke-width="1.1"/><path d="M1.8 10.2A5.9 5.9 0 0 0 10.2 1.8" fill="none" stroke="#fff" stroke-width="1"/><path d="M2.5 9.5A4.9 4.9 0 0 0 9.5 2.5" fill="none" stroke="#e3e3e3" stroke-width="1"/></svg>
<span class="t" style="left:48px;top:508px;letter-spacing:0.3px;">без закладок</span>
<svg style="position:absolute;left:136px;top:509px" width="12" height="12" viewBox="0 0 12 12"><circle cx="6" cy="6" r="5.5" fill="#fff"/><path d="M10.2 1.8A5.9 5.9 0 0 0 1.8 10.2" fill="none" stroke="#8c8c8c" stroke-width="1.1"/><path d="M9.5 2.5A4.9 4.9 0 0 0 2.5 9.5" fill="none" stroke="#5a5a5a" stroke-width="1.1"/><path d="M1.8 10.2A5.9 5.9 0 0 0 10.2 1.8" fill="none" stroke="#fff" stroke-width="1"/><path d="M2.5 9.5A4.9 4.9 0 0 0 9.5 2.5" fill="none" stroke="#e3e3e3" stroke-width="1"/></svg>
<span class="t" style="left:153px;top:508px;-webkit-text-stroke:0.5px #000;letter-spacing:-0.22px;">по типу товара</span>
<svg style="position:absolute;left:248px;top:509px" width="12" height="12" viewBox="0 0 12 12"><circle cx="6" cy="6" r="5.5" fill="#fff"/><path d="M10.2 1.8A5.9 5.9 0 0 0 1.8 10.2" fill="none" stroke="#8c8c8c" stroke-width="1.1"/><path d="M9.5 2.5A4.9 4.9 0 0 0 2.5 9.5" fill="none" stroke="#5a5a5a" stroke-width="1.1"/><path d="M1.8 10.2A5.9 5.9 0 0 0 10.2 1.8" fill="none" stroke="#fff" stroke-width="1"/><path d="M2.5 9.5A4.9 4.9 0 0 0 9.5 2.5" fill="none" stroke="#e3e3e3" stroke-width="1"/><circle cx="6" cy="6" r="2" fill="#000"/></svg>
<span class="t" style="left:265px;top:508px;font-weight:bold;letter-spacing:-0.19px;">за контрагентом</span>
<svg style="position:absolute;left:370px;top:509px" width="12" height="12" viewBox="0 0 12 12"><circle cx="6" cy="6" r="5.5" fill="#fff"/><path d="M10.2 1.8A5.9 5.9 0 0 0 1.8 10.2" fill="none" stroke="#8c8c8c" stroke-width="1.1"/><path d="M9.5 2.5A4.9 4.9 0 0 0 2.5 9.5" fill="none" stroke="#5a5a5a" stroke-width="1.1"/><path d="M1.8 10.2A5.9 5.9 0 0 0 10.2 1.8" fill="none" stroke="#fff" stroke-width="1"/><path d="M2.5 9.5A4.9 4.9 0 0 0 9.5 2.5" fill="none" stroke="#e3e3e3" stroke-width="1"/></svg>
<span class="t" style="left:387px;top:508px;letter-spacing:0.17px;">за видом ПДВ</span>
<svg style="position:absolute;left:479px;top:509px" width="12" height="12" viewBox="0 0 12 12"><circle cx="6" cy="6" r="5.5" fill="#fff"/><path d="M10.2 1.8A5.9 5.9 0 0 0 1.8 10.2" fill="none" stroke="#8c8c8c" stroke-width="1.1"/><path d="M9.5 2.5A4.9 4.9 0 0 0 2.5 9.5" fill="none" stroke="#5a5a5a" stroke-width="1.1"/><path d="M1.8 10.2A5.9 5.9 0 0 0 10.2 1.8" fill="none" stroke="#fff" stroke-width="1"/><path d="M2.5 9.5A4.9 4.9 0 0 0 9.5 2.5" fill="none" stroke="#e3e3e3" stroke-width="1"/></svg>
<span class="t" style="left:496px;top:508px;letter-spacing:0.2px;">за видом торгівлі</span>
<svg style="position:absolute;left:605px;top:509px" width="12" height="12" viewBox="0 0 12 12"><circle cx="6" cy="6" r="5.5" fill="#fff"/><path d="M10.2 1.8A5.9 5.9 0 0 0 1.8 10.2" fill="none" stroke="#8c8c8c" stroke-width="1.1"/><path d="M9.5 2.5A4.9 4.9 0 0 0 2.5 9.5" fill="none" stroke="#5a5a5a" stroke-width="1.1"/><path d="M1.8 10.2A5.9 5.9 0 0 0 10.2 1.8" fill="none" stroke="#fff" stroke-width="1"/><path d="M2.5 9.5A4.9 4.9 0 0 0 9.5 2.5" fill="none" stroke="#e3e3e3" stroke-width="1"/></svg>
<span class="t" style="left:622px;top:508px;letter-spacing:0.04px;">за рахунком постачальника</span>
<svg style="position:absolute;left:785px;top:509px" width="12" height="12" viewBox="0 0 12 12"><circle cx="6" cy="6" r="5.5" fill="#fff"/><path d="M10.2 1.8A5.9 5.9 0 0 0 1.8 10.2" fill="none" stroke="#8c8c8c" stroke-width="1.1"/><path d="M9.5 2.5A4.9 4.9 0 0 0 2.5 9.5" fill="none" stroke="#5a5a5a" stroke-width="1.1"/><path d="M1.8 10.2A5.9 5.9 0 0 0 10.2 1.8" fill="none" stroke="#fff" stroke-width="1"/><path d="M2.5 9.5A4.9 4.9 0 0 0 9.5 2.5" fill="none" stroke="#e3e3e3" stroke-width="1"/></svg>
<span class="t" style="left:802px;top:508px;letter-spacing:0.27px;">за місцем зберігання</span>
<div class="btn" style="left:19px;top:540px;width:105px;height:23px;"><i></i><span style="top:4px;letter-spacing:0.1px;">Друк рухів</span></div>
<div class="btn" style="left:129px;top:540px;width:105px;height:23px;"><i></i><span style="top:4px;">Дере<u>в</u>о</span></div>
<div class="btn" style="left:240px;top:540px;width:153px;height:23px;"><i></i><span style="top:4px;letter-spacing:0.17px;"><u>П</u>ідпорядковані документи</span></div>
<div class="btn" style="left:399px;top:540px;width:86px;height:23px;"><i></i><span style="top:4px;"></span><svg style="position:absolute;left:2px;top:3px;" width="16" height="15" viewBox="0 0 16 15" shape-rendering="crispEdges"><path fill="#000000" d="M0 0h5v1h-5zM0 1h1v1h-1zM5 1h1v1h-1zM0 2h1v1h-1zM4 2h5v1h-5zM0 3h1v1h-1zM2 3h3v1h-3zM9 3h1v1h-1zM0 4h1v1h-1zM4 4h1v1h-1zM8 4h7v1h-7zM0 5h1v1h-1zM4 5h1v1h-1zM6 5h3v1h-3zM15 5h1v1h-1zM0 6h1v1h-1zM4 6h1v1h-1zM8 6h1v1h-1zM15 6h1v1h-1zM0 7h1v1h-1zM4 7h1v1h-1zM6 7h3v1h-3zM15 7h1v1h-1zM0 8h1v1h-1zM4 8h1v1h-1zM8 8h1v1h-1zM15 8h1v1h-1zM0 9h5v1h-5zM8 9h1v1h-1zM15 9h1v1h-1zM4 10h1v1h-1zM8 10h1v1h-1zM15 10h1v1h-1zM4 11h1v1h-1zM8 11h1v1h-1zM15 11h1v1h-1zM4 12h5v1h-5zM15 12h1v1h-1zM8 13h1v1h-1zM15 13h1v1h-1zM8 14h8v1h-8z"/><path fill="#c0c0c0" d="M5 0h11v1h-11zM6 1h10v1h-10zM9 2h7v1h-7zM10 3h6v1h-6zM15 4h1v1h-1zM0 10h4v1h-4zM0 11h4v1h-4zM0 12h4v1h-4zM0 13h8v1h-8zM0 14h8v1h-8z"/><path fill="#ffffff" d="M1 1h4v1h-4zM1 2h3v1h-3zM1 3h1v1h-1zM5 3h4v1h-4zM1 4h3v1h-3zM5 4h3v1h-3zM1 5h3v1h-3zM5 5h1v1h-1zM9 5h6v1h-6zM1 6h3v1h-3zM5 6h3v1h-3zM1 7h3v1h-3zM5 7h1v1h-1zM1 8h3v1h-3zM5 8h3v1h-3zM5 9h3v1h-3zM5 10h3v1h-3zM5 11h3v1h-3z"/><path fill="#e0e0e0" d="M9 6h6v1h-6zM9 7h6v1h-6zM9 8h1v1h-1zM13 8h2v1h-2zM9 9h6v1h-6zM9 10h1v1h-1zM14 10h1v1h-1zM9 11h6v1h-6zM9 12h1v1h-1zM14 12h1v1h-1zM9 13h6v1h-6z"/><path fill="#000080" d="M10 8h3v1h-3zM10 10h4v1h-4zM10 12h4v1h-4z"/></svg><span class="t" style="left:34px;right:auto;top:4px;text-align:left;letter-spacing:0.1px">Історія</span></div>
<div class="btn" style="left:490px;top:540px;width:23px;height:23px;"><i></i><span style="top:4px;"></span></div>
<div style="left:497px;top:543px;width:2px;height:16px;background:#000;"></div>
<div style="left:503px;top:543px;width:2px;height:16px;background:#000;"></div>
</body></html>
